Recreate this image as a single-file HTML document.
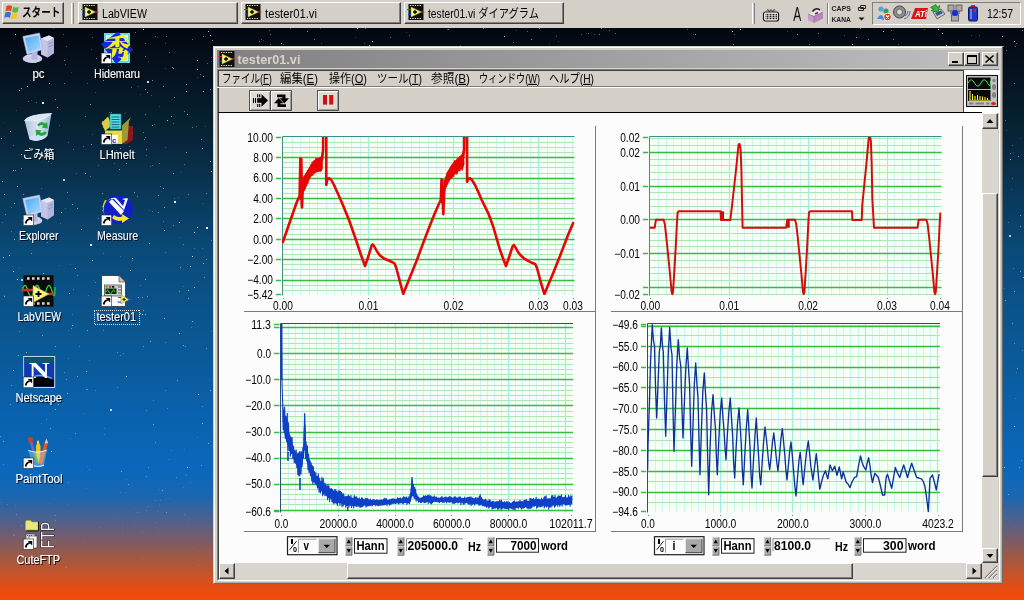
<!DOCTYPE html>
<html lang="ja"><head><meta charset="utf-8"><title>tester01.vi</title>
<style>
*{margin:0;padding:0;box-sizing:border-box}
html,body{width:1024px;height:600px;overflow:hidden}
body{position:relative;font-family:"Liberation Sans","Noto Sans CJK JP",sans-serif;font-size:12px;color:#000;
background:linear-gradient(to bottom,#02060c 0px,#030810 28px,#051422 80px,#06202f 120px,#08283f 150px,#093a5c 200px,#0a4a78 250px,#0a5288 300px,#0a5a9a 360px,#0a62ae 420px,#0a68bc 472px,#1c66b0 497px,#4a6290 518px,#7a5c68 540px,#a8583e 561px,#d8501c 582px,#f04a0c 595px,#f44a08 600px)}
.abs{position:absolute}
svg{position:absolute;left:0;top:0;overflow:visible;opacity:0.999}
svg text{font-family:"Liberation Sans","Noto Sans CJK JP",sans-serif}
#taskbar{position:absolute;left:0;top:0;width:1024px;height:28px;background:#d4d0c8}
.btn{position:absolute;background:#d4d0c8;border:1px solid;border-color:#fff #404040 #404040 #fff;box-shadow:inset -1px -1px 0 #808080,inset 1px 1px 0 #d4d0c8}
.sunk{position:absolute;border:1px solid;border-color:#808080 #fff #fff #808080}
#win{position:absolute;left:213px;top:46px;width:790px;height:538px;background:#d4d0c8;border:1px solid;border-color:#d4d0c8 #6a6a6a #6a6a6a #d4d0c8;box-shadow:inset 1px 1px 0 #fff,inset -1px -1px 0 #b4b0a8}
#title{position:absolute;left:217px;top:50px;width:782px;height:18px;background:linear-gradient(to right,#808080,#c0c0c0)}
#content{position:absolute;left:218px;top:112px;width:764px;height:451px;background:#fcfcfc;border-left:1px solid #404040;border-top:1px solid #000}
.lbl{position:absolute;color:#fff;font-size:12px;white-space:nowrap;text-shadow:1px 1px 1px #000}
</style></head><body>
<svg width="1024" height="600" viewBox="0 0 1024 600"><rect x="92" y="260" width="1" height="1" fill="#fff" opacity="0.60"/><rect x="147" y="92" width="1" height="1" fill="#fff" opacity="0.48"/><rect x="185" y="346" width="1" height="1" fill="#fff" opacity="0.37"/><rect x="64" y="60" width="1" height="1" fill="#fff" opacity="0.42"/><rect x="120" y="256" width="1" height="1" fill="#fff" opacity="0.21"/><rect x="23" y="280" width="1" height="1" fill="#fff" opacity="0.20"/><rect x="154" y="124" width="1" height="1" fill="#fff" opacity="0.24"/><rect x="269" y="30" width="1" height="1" fill="#fff" opacity="0.30"/><rect x="55" y="520" width="1" height="1" fill="#fff" opacity="0.25"/><rect x="68" y="142" width="1" height="1" fill="#fff" opacity="0.29"/><rect x="53" y="28" width="1" height="1" fill="#fff" opacity="0.19"/><rect x="372" y="41" width="1" height="1" fill="#fff" opacity="0.80"/><rect x="152" y="165" width="1" height="1" fill="#fff" opacity="0.30"/><rect x="125" y="492" width="1" height="1" fill="#fff" opacity="0.17"/><rect x="87" y="83" width="1" height="1" fill="#fff" opacity="0.26"/><rect x="23" y="548" width="1" height="1" fill="#fff" opacity="0.06"/><rect x="27" y="316" width="1" height="1" fill="#fff" opacity="0.83"/><rect x="171" y="450" width="1" height="1" fill="#fff" opacity="0.22"/><rect x="1008" y="494" width="1" height="1" fill="#fff" opacity="0.40"/><rect x="364" y="43" width="1" height="1" fill="#fff" opacity="0.26"/><rect x="201" y="139" width="1" height="1" fill="#fff" opacity="0.51"/><rect x="86" y="389" width="1" height="1" fill="#fff" opacity="0.45"/><rect x="174" y="97" width="1" height="1" fill="#fff" opacity="0.51"/><rect x="14" y="559" width="1" height="1" fill="#fff" opacity="0.08"/><rect x="134" y="525" width="1" height="1" fill="#fff" opacity="0.09"/><rect x="19" y="268" width="1" height="1" fill="#fff" opacity="0.15"/><rect x="140" y="94" width="1" height="1" fill="#fff" opacity="0.18"/><rect x="146" y="510" width="1" height="1" fill="#fff" opacity="0.19"/><rect x="19" y="331" width="1" height="1" fill="#fff" opacity="0.28"/><rect x="65" y="566" width="2" height="2" fill="#fff" opacity="0.11"/><rect x="132" y="258" width="1" height="1" fill="#fff" opacity="0.88"/><rect x="58" y="404" width="1" height="1" fill="#fff" opacity="0.53"/><rect x="112" y="116" width="1" height="1" fill="#fff" opacity="0.23"/><rect x="355" y="37" width="1" height="1" fill="#fff" opacity="0.16"/><rect x="194" y="287" width="1" height="1" fill="#fff" opacity="0.59"/><rect x="55" y="99" width="1" height="1" fill="#fff" opacity="0.45"/><rect x="86" y="488" width="1" height="1" fill="#fff" opacity="0.13"/><rect x="365" y="28" width="1" height="1" fill="#fff" opacity="0.34"/><rect x="516" y="30" width="1" height="1" fill="#fff" opacity="0.19"/><rect x="23" y="194" width="1" height="1" fill="#fff" opacity="0.38"/><rect x="153" y="424" width="1" height="1" fill="#fff" opacity="0.47"/><rect x="142" y="314" width="1" height="1" fill="#fff" opacity="0.87"/><rect x="31" y="100" width="1" height="1" fill="#fff" opacity="0.19"/><rect x="3" y="464" width="1" height="1" fill="#fff" opacity="0.25"/><rect x="76" y="173" width="1" height="1" fill="#fff" opacity="0.23"/><rect x="150" y="166" width="1" height="1" fill="#fff" opacity="0.27"/><rect x="581" y="34" width="1" height="1" fill="#fff" opacity="0.26"/><rect x="17" y="279" width="1" height="1" fill="#fff" opacity="0.94"/><rect x="145" y="314" width="1" height="1" fill="#fff" opacity="0.48"/><rect x="25" y="29" width="1" height="1" fill="#fff" opacity="0.33"/><rect x="860" y="28" width="1" height="1" fill="#fff" opacity="0.49"/><rect x="122" y="534" width="1" height="1" fill="#fff" opacity="0.12"/><rect x="1022" y="350" width="1" height="1" fill="#fff" opacity="0.26"/><rect x="49" y="83" width="1" height="1" fill="#fff" opacity="0.66"/><rect x="194" y="232" width="1" height="1" fill="#fff" opacity="0.90"/><rect x="50" y="428" width="1" height="1" fill="#fff" opacity="0.38"/><rect x="171" y="116" width="1" height="1" fill="#fff" opacity="0.51"/><rect x="197" y="77" width="1" height="1" fill="#fff" opacity="0.19"/><rect x="63" y="179" width="2" height="2" fill="#fff" opacity="0.74"/><rect x="893" y="39" width="1" height="1" fill="#fff" opacity="0.43"/><rect x="601" y="28" width="1" height="1" fill="#fff" opacity="0.52"/><rect x="111" y="112" width="1" height="1" fill="#fff" opacity="0.42"/><rect x="72" y="314" width="1" height="1" fill="#fff" opacity="0.24"/><rect x="615" y="33" width="1" height="1" fill="#fff" opacity="0.33"/><rect x="314" y="39" width="1" height="1" fill="#fff" opacity="0.42"/><rect x="149" y="243" width="1" height="1" fill="#fff" opacity="0.54"/><rect x="145" y="56" width="1" height="1" fill="#fff" opacity="0.31"/><rect x="189" y="539" width="1" height="1" fill="#fff" opacity="0.06"/><rect x="2" y="181" width="1" height="1" fill="#fff" opacity="0.53"/><rect x="50" y="286" width="1" height="1" fill="#fff" opacity="0.52"/><rect x="197" y="227" width="1" height="1" fill="#fff" opacity="0.56"/><rect x="35" y="62" width="1" height="1" fill="#fff" opacity="0.65"/><rect x="3" y="441" width="1" height="1" fill="#fff" opacity="0.45"/><rect x="24" y="155" width="1" height="1" fill="#fff" opacity="0.53"/><rect x="187" y="467" width="1" height="1" fill="#fff" opacity="0.57"/><rect x="66" y="46" width="1" height="1" fill="#fff" opacity="0.28"/><rect x="1003" y="511" width="1" height="1" fill="#fff" opacity="0.06"/><rect x="98" y="300" width="1" height="1" fill="#fff" opacity="0.24"/><rect x="157" y="511" width="1" height="1" fill="#fff" opacity="0.11"/><rect x="1014" y="83" width="1" height="1" fill="#fff" opacity="0.48"/><rect x="41" y="188" width="1" height="1" fill="#fff" opacity="0.23"/><rect x="144" y="139" width="1" height="1" fill="#fff" opacity="0.39"/><rect x="11" y="207" width="1" height="1" fill="#fff" opacity="0.22"/><rect x="64" y="83" width="1" height="1" fill="#fff" opacity="0.37"/><rect x="167" y="408" width="1" height="1" fill="#fff" opacity="0.27"/><rect x="1020" y="226" width="1" height="1" fill="#fff" opacity="0.44"/><rect x="208" y="31" width="1" height="1" fill="#fff" opacity="0.72"/><rect x="166" y="36" width="1" height="1" fill="#fff" opacity="0.41"/><rect x="129" y="543" width="1" height="1" fill="#fff" opacity="0.03"/><rect x="126" y="163" width="1" height="1" fill="#fff" opacity="0.51"/><rect x="42" y="335" width="1" height="1" fill="#fff" opacity="0.49"/><rect x="120" y="355" width="1" height="1" fill="#fff" opacity="0.27"/><rect x="23" y="366" width="1" height="1" fill="#fff" opacity="0.46"/><rect x="183" y="286" width="1" height="1" fill="#fff" opacity="0.20"/><rect x="198" y="565" width="1" height="1" fill="#fff" opacity="0.14"/><rect x="169" y="459" width="1" height="1" fill="#fff" opacity="0.21"/><rect x="37" y="127" width="1" height="1" fill="#fff" opacity="0.52"/><rect x="1016" y="372" width="1" height="1" fill="#fff" opacity="0.26"/><rect x="1014" y="343" width="1" height="1" fill="#fff" opacity="0.33"/><rect x="320" y="28" width="1" height="1" fill="#fff" opacity="0.21"/><rect x="135" y="152" width="1" height="1" fill="#fff" opacity="0.16"/><rect x="2" y="222" width="1" height="1" fill="#fff" opacity="0.29"/><rect x="152" y="80" width="1" height="1" fill="#fff" opacity="0.50"/><rect x="270" y="34" width="1" height="1" fill="#fff" opacity="0.37"/><rect x="797" y="34" width="1" height="1" fill="#fff" opacity="0.53"/><rect x="145" y="137" width="1" height="1" fill="#fff" opacity="0.35"/><rect x="178" y="197" width="1" height="1" fill="#fff" opacity="0.17"/><rect x="732" y="31" width="1" height="1" fill="#fff" opacity="0.85"/><rect x="107" y="155" width="1" height="1" fill="#fff" opacity="0.28"/><rect x="15" y="170" width="1" height="1" fill="#fff" opacity="0.45"/><rect x="27" y="86" width="1" height="1" fill="#fff" opacity="0.69"/><rect x="145" y="43" width="1" height="1" fill="#fff" opacity="0.43"/><rect x="210" y="89" width="1" height="1" fill="#fff" opacity="0.49"/><rect x="21" y="168" width="1" height="1" fill="#fff" opacity="0.44"/><rect x="31" y="253" width="1" height="1" fill="#fff" opacity="0.46"/><rect x="1" y="138" width="1" height="1" fill="#fff" opacity="0.54"/><rect x="4" y="296" width="1" height="1" fill="#fff" opacity="0.47"/><rect x="188" y="298" width="1" height="1" fill="#fff" opacity="0.48"/><rect x="211" y="171" width="1" height="1" fill="#fff" opacity="0.75"/><rect x="159" y="489" width="1" height="1" fill="#fff" opacity="0.11"/><rect x="159" y="163" width="1" height="1" fill="#fff" opacity="0.36"/><rect x="164" y="207" width="1" height="1" fill="#fff" opacity="0.54"/><rect x="211" y="240" width="1" height="1" fill="#fff" opacity="0.31"/><rect x="1008" y="222" width="1" height="1" fill="#fff" opacity="0.26"/><rect x="409" y="35" width="1" height="1" fill="#fff" opacity="0.32"/><rect x="128" y="484" width="1" height="1" fill="#fff" opacity="0.36"/><rect x="15" y="34" width="1" height="1" fill="#fff" opacity="0.81"/><rect x="146" y="155" width="1" height="1" fill="#fff" opacity="0.29"/><rect x="156" y="522" width="1" height="1" fill="#fff" opacity="0.14"/><rect x="202" y="406" width="1" height="1" fill="#fff" opacity="0.33"/><rect x="142" y="297" width="1" height="1" fill="#fff" opacity="0.34"/><rect x="147" y="296" width="1" height="1" fill="#fff" opacity="0.37"/><rect x="883" y="31" width="1" height="1" fill="#fff" opacity="0.74"/><rect x="77" y="376" width="1" height="1" fill="#fff" opacity="0.39"/><rect x="41" y="423" width="1" height="1" fill="#fff" opacity="0.17"/><rect x="307" y="31" width="1" height="1" fill="#fff" opacity="0.52"/><rect x="103" y="127" width="1" height="1" fill="#fff" opacity="0.46"/><rect x="121" y="471" width="1" height="1" fill="#fff" opacity="0.46"/><rect x="14" y="239" width="1" height="1" fill="#fff" opacity="0.53"/><rect x="1004" y="288" width="1" height="1" fill="#fff" opacity="0.19"/><rect x="155" y="36" width="1" height="1" fill="#fff" opacity="0.42"/><rect x="51" y="451" width="1" height="1" fill="#fff" opacity="0.65"/><rect x="86" y="371" width="1" height="1" fill="#fff" opacity="0.52"/><rect x="734" y="34" width="1" height="1" fill="#fff" opacity="0.41"/><rect x="169" y="498" width="1" height="1" fill="#fff" opacity="0.13"/><rect x="290" y="28" width="1" height="1" fill="#fff" opacity="0.32"/><rect x="87" y="330" width="1" height="1" fill="#fff" opacity="0.45"/><rect x="89" y="469" width="1" height="1" fill="#fff" opacity="0.25"/><rect x="196" y="126" width="1" height="1" fill="#fff" opacity="0.30"/><rect x="45" y="573" width="1" height="1" fill="#fff" opacity="0.06"/><rect x="531" y="39" width="1" height="1" fill="#fff" opacity="0.55"/><rect x="205" y="126" width="1" height="1" fill="#fff" opacity="0.17"/><rect x="163" y="556" width="1" height="1" fill="#fff" opacity="0.02"/><rect x="57" y="107" width="1" height="1" fill="#fff" opacity="0.53"/><rect x="107" y="205" width="1" height="1" fill="#fff" opacity="0.20"/><rect x="693" y="34" width="1" height="1" fill="#fff" opacity="0.23"/><rect x="146" y="149" width="1" height="1" fill="#fff" opacity="0.44"/><rect x="206" y="227" width="2" height="2" fill="#fff" opacity="1.00"/><rect x="1002" y="36" width="1" height="1" fill="#fff" opacity="0.69"/><rect x="143" y="29" width="1" height="1" fill="#fff" opacity="0.76"/><rect x="190" y="266" width="1" height="1" fill="#fff" opacity="0.64"/><rect x="184" y="449" width="1" height="1" fill="#fff" opacity="0.14"/><rect x="89" y="360" width="1" height="1" fill="#fff" opacity="0.23"/><rect x="207" y="63" width="1" height="1" fill="#fff" opacity="0.31"/><rect x="504" y="36" width="1" height="1" fill="#fff" opacity="0.74"/><rect x="190" y="482" width="1" height="1" fill="#fff" opacity="0.16"/><rect x="609" y="30" width="1" height="1" fill="#fff" opacity="0.33"/><rect x="186" y="84" width="1" height="1" fill="#fff" opacity="0.48"/><rect x="30" y="80" width="1" height="1" fill="#fff" opacity="0.23"/><rect x="18" y="355" width="1" height="1" fill="#fff" opacity="0.43"/><rect x="105" y="503" width="1" height="1" fill="#fff" opacity="0.08"/><rect x="150" y="341" width="1" height="1" fill="#fff" opacity="0.48"/><rect x="1004" y="467" width="1" height="1" fill="#fff" opacity="0.58"/><rect x="54" y="311" width="1" height="1" fill="#fff" opacity="0.65"/><rect x="70" y="264" width="1" height="1" fill="#fff" opacity="0.16"/><rect x="142" y="558" width="1" height="1" fill="#fff" opacity="0.12"/><rect x="123" y="353" width="1" height="1" fill="#fff" opacity="0.26"/><rect x="151" y="95" width="1" height="1" fill="#fff" opacity="0.27"/><rect x="599" y="34" width="1" height="1" fill="#fff" opacity="0.49"/><rect x="1011" y="189" width="1" height="1" fill="#fff" opacity="0.21"/><rect x="68" y="504" width="1" height="1" fill="#fff" opacity="0.12"/><rect x="111" y="151" width="1" height="1" fill="#fff" opacity="0.85"/><rect x="158" y="212" width="1" height="1" fill="#fff" opacity="0.42"/><rect x="891" y="30" width="1" height="1" fill="#fff" opacity="0.38"/><rect x="188" y="194" width="1" height="1" fill="#fff" opacity="0.38"/><rect x="10" y="53" width="1" height="1" fill="#fff" opacity="0.35"/><rect x="101" y="232" width="1" height="1" fill="#fff" opacity="0.37"/><rect x="1020" y="215" width="1" height="1" fill="#fff" opacity="0.48"/><rect x="174" y="201" width="2" height="2" fill="#fff" opacity="0.95"/><rect x="160" y="186" width="1" height="1" fill="#fff" opacity="0.35"/><rect x="192" y="127" width="1" height="1" fill="#fff" opacity="0.39"/><rect x="4" y="194" width="1" height="1" fill="#fff" opacity="0.78"/><rect x="124" y="113" width="1" height="1" fill="#fff" opacity="0.19"/><rect x="102" y="121" width="1" height="1" fill="#fff" opacity="0.48"/><rect x="63" y="34" width="1" height="1" fill="#fff" opacity="0.28"/><rect x="173" y="173" width="1" height="1" fill="#fff" opacity="0.51"/><rect x="55" y="515" width="1" height="1" fill="#fff" opacity="0.23"/><rect x="45" y="537" width="1" height="1" fill="#fff" opacity="0.08"/><rect x="126" y="479" width="1" height="1" fill="#fff" opacity="0.13"/><rect x="130" y="270" width="1" height="1" fill="#fff" opacity="0.87"/><rect x="163" y="221" width="1" height="1" fill="#fff" opacity="0.30"/><rect x="67" y="198" width="1" height="1" fill="#fff" opacity="0.20"/><rect x="283" y="44" width="1" height="1" fill="#fff" opacity="0.42"/><rect x="186" y="91" width="1" height="1" fill="#fff" opacity="0.84"/><rect x="40" y="116" width="1" height="1" fill="#fff" opacity="0.27"/><rect x="183" y="487" width="1" height="1" fill="#fff" opacity="0.13"/><rect x="357" y="28" width="1" height="1" fill="#fff" opacity="0.86"/><rect x="48" y="161" width="1" height="1" fill="#fff" opacity="0.47"/><rect x="55" y="409" width="1" height="1" fill="#fff" opacity="0.52"/><rect x="60" y="223" width="1" height="1" fill="#fff" opacity="0.23"/><rect x="211" y="61" width="1" height="1" fill="#fff" opacity="0.23"/><rect x="115" y="205" width="1" height="1" fill="#fff" opacity="0.30"/><rect x="172" y="67" width="1" height="1" fill="#fff" opacity="0.55"/><rect x="28" y="451" width="1" height="1" fill="#fff" opacity="0.17"/><rect x="161" y="191" width="1" height="1" fill="#fff" opacity="0.18"/><rect x="91" y="49" width="1" height="1" fill="#fff" opacity="0.23"/><rect x="740" y="29" width="1" height="1" fill="#fff" opacity="0.89"/><rect x="200" y="74" width="1" height="1" fill="#fff" opacity="0.33"/><rect x="28" y="131" width="1" height="1" fill="#fff" opacity="0.33"/><rect x="87" y="389" width="1" height="1" fill="#fff" opacity="0.32"/><rect x="184" y="514" width="1" height="1" fill="#fff" opacity="0.16"/><rect x="115" y="308" width="1" height="1" fill="#fff" opacity="0.31"/><rect x="75" y="268" width="1" height="1" fill="#fff" opacity="0.77"/><rect x="117" y="569" width="1" height="1" fill="#fff" opacity="0.07"/><rect x="115" y="534" width="1" height="1" fill="#fff" opacity="0.04"/><rect x="21" y="88" width="1" height="1" fill="#fff" opacity="0.62"/><rect x="147" y="506" width="1" height="1" fill="#fff" opacity="0.18"/><rect x="971" y="35" width="1" height="1" fill="#fff" opacity="0.21"/><rect x="186" y="475" width="1" height="1" fill="#fff" opacity="0.21"/><rect x="162" y="490" width="1" height="1" fill="#fff" opacity="0.40"/><rect x="77" y="208" width="1" height="1" fill="#fff" opacity="0.51"/><rect x="173" y="225" width="1" height="1" fill="#fff" opacity="0.38"/><rect x="21" y="279" width="2" height="2" fill="#fff" opacity="0.71"/><rect x="1015" y="46" width="1" height="1" fill="#fff" opacity="0.46"/><rect x="61" y="212" width="1" height="1" fill="#fff" opacity="0.55"/><rect x="7" y="504" width="1" height="1" fill="#fff" opacity="0.15"/><rect x="67" y="192" width="1" height="1" fill="#fff" opacity="0.44"/><rect x="183" y="345" width="1" height="1" fill="#fff" opacity="0.46"/><rect x="69" y="293" width="1" height="1" fill="#fff" opacity="0.66"/><rect x="263" y="40" width="1" height="1" fill="#fff" opacity="0.26"/><rect x="192" y="321" width="1" height="1" fill="#fff" opacity="0.52"/><rect x="13" y="534" width="2" height="2" fill="#fff" opacity="0.13"/><rect x="159" y="106" width="1" height="1" fill="#fff" opacity="0.19"/><rect x="135" y="32" width="1" height="1" fill="#fff" opacity="0.41"/><rect x="1013" y="152" width="1" height="1" fill="#fff" opacity="0.19"/><rect x="28" y="101" width="1" height="1" fill="#fff" opacity="0.35"/><rect x="152" y="125" width="1" height="1" fill="#fff" opacity="0.52"/><rect x="165" y="43" width="1" height="1" fill="#fff" opacity="0.25"/><rect x="1005" y="300" width="1" height="1" fill="#fff" opacity="0.47"/><rect x="208" y="443" width="1" height="1" fill="#fff" opacity="0.46"/><rect x="160" y="500" width="1" height="1" fill="#fff" opacity="0.19"/><rect x="186" y="500" width="1" height="1" fill="#fff" opacity="0.07"/><rect x="1003" y="46" width="1" height="1" fill="#fff" opacity="0.47"/><rect x="115" y="221" width="1" height="1" fill="#fff" opacity="0.52"/><rect x="181" y="172" width="1" height="1" fill="#fff" opacity="0.17"/><rect x="10" y="404" width="1" height="1" fill="#fff" opacity="0.37"/><rect x="1022" y="30" width="1" height="1" fill="#fff" opacity="0.52"/><rect x="203" y="91" width="1" height="1" fill="#fff" opacity="0.86"/><rect x="0" y="436" width="1" height="1" fill="#fff" opacity="0.34"/><rect x="1018" y="156" width="1" height="1" fill="#fff" opacity="0.45"/><rect x="145" y="535" width="1" height="1" fill="#fff" opacity="0.06"/><rect x="176" y="477" width="1" height="1" fill="#fff" opacity="0.28"/><rect x="44" y="236" width="1" height="1" fill="#fff" opacity="0.88"/><rect x="125" y="112" width="1" height="1" fill="#fff" opacity="0.19"/><rect x="90" y="244" width="2" height="2" fill="#fff" opacity="0.91"/><rect x="153" y="400" width="1" height="1" fill="#fff" opacity="0.25"/><rect x="390" y="37" width="1" height="1" fill="#fff" opacity="0.38"/><rect x="59" y="125" width="1" height="1" fill="#fff" opacity="0.26"/><rect x="206" y="259" width="1" height="1" fill="#fff" opacity="0.40"/><rect x="26" y="352" width="1" height="1" fill="#fff" opacity="0.49"/><rect x="41" y="399" width="1" height="1" fill="#fff" opacity="0.46"/><rect x="120" y="148" width="1" height="1" fill="#fff" opacity="0.48"/><rect x="104" y="76" width="1" height="1" fill="#fff" opacity="0.38"/><rect x="56" y="400" width="1" height="1" fill="#fff" opacity="0.17"/><rect x="149" y="210" width="1" height="1" fill="#fff" opacity="0.15"/><rect x="1012" y="178" width="1" height="1" fill="#fff" opacity="0.28"/><rect x="53" y="321" width="1" height="1" fill="#fff" opacity="0.35"/><rect x="52" y="199" width="1" height="1" fill="#fff" opacity="0.31"/><rect x="59" y="265" width="1" height="1" fill="#fff" opacity="0.17"/><rect x="103" y="80" width="1" height="1" fill="#fff" opacity="0.53"/><rect x="95" y="282" width="1" height="1" fill="#fff" opacity="0.32"/><rect x="90" y="104" width="1" height="1" fill="#fff" opacity="0.51"/><rect x="946" y="45" width="1" height="1" fill="#fff" opacity="0.54"/><rect x="167" y="120" width="1" height="1" fill="#fff" opacity="0.68"/><rect x="120" y="283" width="1" height="1" fill="#fff" opacity="0.36"/><rect x="202" y="248" width="1" height="1" fill="#fff" opacity="0.20"/><rect x="15" y="543" width="1" height="1" fill="#fff" opacity="0.06"/><rect x="270" y="44" width="1" height="1" fill="#fff" opacity="0.36"/><rect x="1006" y="50" width="1" height="1" fill="#fff" opacity="0.43"/><rect x="942" y="33" width="1" height="1" fill="#fff" opacity="0.71"/><rect x="202" y="148" width="1" height="1" fill="#fff" opacity="0.54"/><rect x="1021" y="460" width="1" height="1" fill="#fff" opacity="0.33"/><rect x="166" y="556" width="1" height="1" fill="#fff" opacity="0.03"/><rect x="4" y="295" width="1" height="1" fill="#fff" opacity="0.19"/><rect x="90" y="176" width="1" height="1" fill="#fff" opacity="0.33"/><rect x="539" y="28" width="1" height="1" fill="#fff" opacity="0.53"/><rect x="103" y="330" width="1" height="1" fill="#fff" opacity="0.30"/><rect x="35" y="205" width="1" height="1" fill="#fff" opacity="0.53"/><rect x="47" y="242" width="1" height="1" fill="#fff" opacity="0.41"/><rect x="165" y="342" width="1" height="1" fill="#fff" opacity="0.29"/><rect x="143" y="310" width="1" height="1" fill="#fff" opacity="0.45"/><rect x="174" y="198" width="1" height="1" fill="#fff" opacity="0.27"/><rect x="202" y="203" width="1" height="1" fill="#fff" opacity="0.19"/><rect x="155" y="442" width="1" height="1" fill="#fff" opacity="0.35"/><rect x="71" y="328" width="1" height="1" fill="#fff" opacity="0.32"/><rect x="68" y="358" width="1" height="1" fill="#fff" opacity="0.24"/><rect x="549" y="44" width="1" height="1" fill="#fff" opacity="0.16"/><rect x="64" y="372" width="1" height="1" fill="#fff" opacity="0.31"/><rect x="1019" y="467" width="1" height="1" fill="#fff" opacity="0.36"/><rect x="73" y="289" width="1" height="1" fill="#fff" opacity="0.33"/><rect x="194" y="248" width="1" height="1" fill="#fff" opacity="0.23"/><rect x="210" y="35" width="1" height="1" fill="#fff" opacity="0.84"/><rect x="179" y="222" width="1" height="1" fill="#fff" opacity="0.87"/><rect x="109" y="112" width="1" height="1" fill="#fff" opacity="0.34"/><rect x="1014" y="526" width="1" height="1" fill="#fff" opacity="0.11"/><rect x="131" y="87" width="1" height="1" fill="#fff" opacity="0.35"/><rect x="21" y="525" width="1" height="1" fill="#fff" opacity="0.23"/><rect x="13" y="145" width="1" height="1" fill="#fff" opacity="0.30"/><rect x="9" y="482" width="1" height="1" fill="#fff" opacity="0.09"/><rect x="72" y="204" width="1" height="1" fill="#fff" opacity="0.50"/><rect x="210" y="161" width="1" height="1" fill="#fff" opacity="0.70"/><rect x="204" y="277" width="1" height="1" fill="#fff" opacity="0.40"/><rect x="145" y="525" width="1" height="1" fill="#fff" opacity="0.06"/><rect x="1010" y="153" width="1" height="1" fill="#fff" opacity="0.47"/><rect x="96" y="561" width="1" height="1" fill="#fff" opacity="0.03"/><rect x="157" y="37" width="1" height="1" fill="#fff" opacity="0.19"/><rect x="938" y="29" width="1" height="1" fill="#fff" opacity="0.77"/><rect x="406" y="32" width="1" height="1" fill="#fff" opacity="0.16"/><rect x="787" y="31" width="1" height="1" fill="#fff" opacity="0.20"/><rect x="733" y="44" width="1" height="1" fill="#fff" opacity="0.49"/><rect x="184" y="543" width="1" height="1" fill="#fff" opacity="0.04"/><rect x="21" y="154" width="1" height="1" fill="#fff" opacity="0.92"/><rect x="164" y="318" width="1" height="1" fill="#fff" opacity="0.53"/><rect x="91" y="144" width="1" height="1" fill="#fff" opacity="0.51"/><rect x="13" y="170" width="1" height="1" fill="#fff" opacity="0.55"/><rect x="180" y="267" width="1" height="1" fill="#fff" opacity="0.43"/><rect x="65" y="64" width="1" height="1" fill="#fff" opacity="0.29"/><rect x="145" y="89" width="1" height="1" fill="#fff" opacity="0.54"/><rect x="102" y="193" width="1" height="1" fill="#fff" opacity="0.43"/><rect x="852" y="44" width="1" height="1" fill="#fff" opacity="0.64"/><rect x="10" y="131" width="1" height="1" fill="#fff" opacity="0.61"/><rect x="147" y="81" width="2" height="2" fill="#fff" opacity="0.81"/><rect x="114" y="163" width="1" height="1" fill="#fff" opacity="0.26"/><rect x="51" y="391" width="1" height="1" fill="#fff" opacity="0.16"/><rect x="95" y="92" width="1" height="1" fill="#fff" opacity="0.22"/><rect x="121" y="65" width="1" height="1" fill="#fff" opacity="0.34"/><rect x="73" y="149" width="1" height="1" fill="#fff" opacity="0.38"/><rect x="85" y="173" width="1" height="1" fill="#fff" opacity="0.73"/><rect x="210" y="390" width="1" height="1" fill="#fff" opacity="0.54"/><rect x="11" y="385" width="1" height="1" fill="#fff" opacity="0.34"/><rect x="148" y="467" width="1" height="1" fill="#fff" opacity="0.33"/><rect x="186" y="152" width="1" height="1" fill="#fff" opacity="0.51"/><rect x="83" y="146" width="1" height="1" fill="#fff" opacity="0.33"/><rect x="143" y="132" width="1" height="1" fill="#fff" opacity="0.38"/><rect x="695" y="34" width="1" height="1" fill="#fff" opacity="0.64"/><rect x="1023" y="277" width="1" height="1" fill="#fff" opacity="0.53"/><rect x="23" y="232" width="1" height="1" fill="#fff" opacity="0.48"/><rect x="140" y="313" width="1" height="1" fill="#fff" opacity="0.57"/><rect x="17" y="186" width="1" height="1" fill="#fff" opacity="0.54"/><rect x="197" y="69" width="1" height="1" fill="#fff" opacity="0.78"/><rect x="75" y="433" width="1" height="1" fill="#fff" opacity="0.38"/><rect x="818" y="33" width="1" height="1" fill="#fff" opacity="0.42"/><rect x="184" y="552" width="1" height="1" fill="#fff" opacity="0.05"/><rect x="130" y="149" width="1" height="1" fill="#fff" opacity="0.26"/><rect x="36" y="102" width="1" height="1" fill="#fff" opacity="0.32"/><rect x="79" y="346" width="1" height="1" fill="#fff" opacity="0.29"/><rect x="179" y="291" width="1" height="1" fill="#fff" opacity="0.42"/><rect x="164" y="230" width="1" height="1" fill="#fff" opacity="0.86"/><rect x="203" y="36" width="1" height="1" fill="#fff" opacity="0.44"/><rect x="4" y="122" width="1" height="1" fill="#fff" opacity="0.15"/><rect x="19" y="90" width="1" height="1" fill="#fff" opacity="0.94"/><rect x="152" y="211" width="1" height="1" fill="#fff" opacity="0.28"/><rect x="85" y="116" width="1" height="1" fill="#fff" opacity="0.40"/><rect x="192" y="536" width="1" height="1" fill="#fff" opacity="0.04"/><rect x="95" y="390" width="1" height="1" fill="#fff" opacity="0.23"/><rect x="122" y="305" width="1" height="1" fill="#fff" opacity="0.44"/><rect x="108" y="66" width="1" height="1" fill="#fff" opacity="0.34"/><rect x="107" y="277" width="1" height="1" fill="#fff" opacity="0.26"/><rect x="38" y="564" width="1" height="1" fill="#fff" opacity="0.05"/><rect x="70" y="438" width="1" height="1" fill="#fff" opacity="0.16"/><rect x="138" y="86" width="1" height="1" fill="#fff" opacity="0.22"/><rect x="173" y="123" width="1" height="1" fill="#fff" opacity="0.32"/><rect x="119" y="169" width="1" height="1" fill="#fff" opacity="0.51"/><rect x="132" y="133" width="1" height="1" fill="#fff" opacity="0.59"/><rect x="192" y="256" width="1" height="1" fill="#fff" opacity="0.90"/><rect x="588" y="33" width="1" height="1" fill="#fff" opacity="0.39"/><rect x="112" y="152" width="1" height="1" fill="#fff" opacity="0.71"/><rect x="1014" y="426" width="1" height="1" fill="#fff" opacity="0.62"/><rect x="49" y="503" width="1" height="1" fill="#fff" opacity="0.11"/><rect x="102" y="206" width="1" height="1" fill="#fff" opacity="0.47"/><rect x="94" y="314" width="1" height="1" fill="#fff" opacity="0.29"/><rect x="206" y="193" width="1" height="1" fill="#fff" opacity="0.44"/><rect x="191" y="327" width="1" height="1" fill="#fff" opacity="0.21"/><rect x="187" y="525" width="1" height="1" fill="#fff" opacity="0.12"/><rect x="212" y="40" width="1" height="1" fill="#fff" opacity="0.51"/><rect x="5" y="214" width="1" height="1" fill="#fff" opacity="0.45"/><rect x="206" y="348" width="1" height="1" fill="#fff" opacity="0.43"/><rect x="53" y="544" width="1" height="1" fill="#fff" opacity="0.03"/><rect x="145" y="279" width="1" height="1" fill="#fff" opacity="0.55"/><rect x="165" y="252" width="1" height="1" fill="#fff" opacity="0.27"/><rect x="165" y="147" width="1" height="1" fill="#fff" opacity="0.23"/><rect x="188" y="290" width="1" height="1" fill="#fff" opacity="0.54"/><rect x="173" y="68" width="1" height="1" fill="#fff" opacity="0.54"/><rect x="155" y="500" width="1" height="1" fill="#fff" opacity="0.21"/><rect x="118" y="518" width="1" height="1" fill="#fff" opacity="0.08"/><rect x="197" y="60" width="1" height="1" fill="#fff" opacity="0.61"/><rect x="197" y="437" width="1" height="1" fill="#fff" opacity="0.16"/><rect x="39" y="58" width="1" height="1" fill="#fff" opacity="0.16"/><rect x="115" y="116" width="1" height="1" fill="#fff" opacity="0.39"/><rect x="184" y="111" width="1" height="1" fill="#fff" opacity="0.44"/><rect x="60" y="318" width="1" height="1" fill="#fff" opacity="0.33"/><rect x="179" y="237" width="1" height="1" fill="#fff" opacity="0.15"/><rect x="527" y="31" width="1" height="1" fill="#fff" opacity="0.32"/><rect x="84" y="536" width="1" height="1" fill="#fff" opacity="0.08"/><rect x="99" y="298" width="1" height="1" fill="#fff" opacity="0.24"/><rect x="1012" y="323" width="1" height="1" fill="#fff" opacity="0.40"/><rect x="35" y="282" width="1" height="1" fill="#fff" opacity="0.44"/><rect x="167" y="536" width="1" height="1" fill="#fff" opacity="0.04"/><rect x="100" y="527" width="1" height="1" fill="#fff" opacity="0.10"/><rect x="140" y="285" width="1" height="1" fill="#fff" opacity="0.26"/><rect x="166" y="512" width="1" height="1" fill="#fff" opacity="0.32"/><rect x="143" y="346" width="1" height="1" fill="#fff" opacity="0.37"/><rect x="321" y="43" width="1" height="1" fill="#fff" opacity="0.20"/><rect x="1015" y="398" width="1" height="1" fill="#fff" opacity="0.17"/><rect x="9" y="255" width="1" height="1" fill="#fff" opacity="0.79"/><rect x="844" y="35" width="1" height="1" fill="#fff" opacity="0.22"/><rect x="68" y="482" width="1" height="1" fill="#fff" opacity="0.25"/><rect x="1017" y="368" width="1" height="1" fill="#fff" opacity="0.44"/><rect x="145" y="114" width="1" height="1" fill="#fff" opacity="0.39"/><rect x="556" y="36" width="1" height="1" fill="#fff" opacity="0.32"/><rect x="71" y="72" width="1" height="1" fill="#fff" opacity="0.19"/><rect x="158" y="195" width="1" height="1" fill="#fff" opacity="0.51"/><rect x="169" y="52" width="1" height="1" fill="#fff" opacity="0.49"/><rect x="104" y="434" width="1" height="1" fill="#fff" opacity="0.20"/><rect x="924" y="29" width="1" height="1" fill="#fff" opacity="0.31"/><rect x="203" y="76" width="1" height="1" fill="#fff" opacity="0.55"/><rect x="72" y="325" width="1" height="1" fill="#fff" opacity="0.59"/><rect x="198" y="394" width="1" height="1" fill="#fff" opacity="0.67"/><rect x="46" y="419" width="1" height="1" fill="#fff" opacity="0.28"/><rect x="55" y="346" width="1" height="1" fill="#fff" opacity="0.43"/><rect x="448" y="29" width="1" height="1" fill="#fff" opacity="0.44"/><rect x="159" y="505" width="1" height="1" fill="#fff" opacity="0.12"/><rect x="687" y="29" width="1" height="1" fill="#fff" opacity="0.29"/><rect x="369" y="45" width="1" height="1" fill="#fff" opacity="0.76"/><rect x="187" y="114" width="1" height="1" fill="#fff" opacity="0.52"/><rect x="122" y="521" width="1" height="1" fill="#fff" opacity="0.11"/><rect x="261" y="39" width="1" height="1" fill="#fff" opacity="0.30"/><rect x="11" y="231" width="1" height="1" fill="#fff" opacity="0.28"/><rect x="192" y="39" width="1" height="1" fill="#fff" opacity="0.39"/><rect x="37" y="205" width="1" height="1" fill="#fff" opacity="0.39"/><rect x="1010" y="159" width="1" height="1" fill="#fff" opacity="0.65"/><rect x="38" y="463" width="1" height="1" fill="#fff" opacity="0.32"/><rect x="55" y="236" width="1" height="1" fill="#fff" opacity="0.40"/><rect x="93" y="280" width="1" height="1" fill="#fff" opacity="0.15"/><rect x="95" y="77" width="1" height="1" fill="#fff" opacity="0.32"/><rect x="1005" y="120" width="1" height="1" fill="#fff" opacity="0.35"/><rect x="117" y="387" width="1" height="1" fill="#fff" opacity="0.28"/><rect x="165" y="390" width="1" height="1" fill="#fff" opacity="0.31"/><rect x="29" y="148" width="1" height="1" fill="#fff" opacity="0.82"/><rect x="177" y="380" width="1" height="1" fill="#fff" opacity="0.41"/><rect x="137" y="196" width="1" height="1" fill="#fff" opacity="0.37"/><rect x="16" y="514" width="1" height="1" fill="#fff" opacity="0.27"/><rect x="26" y="212" width="1" height="1" fill="#fff" opacity="0.18"/><rect x="163" y="188" width="1" height="1" fill="#fff" opacity="0.52"/><rect x="1013" y="268" width="1" height="1" fill="#fff" opacity="0.26"/><rect x="93" y="534" width="1" height="1" fill="#fff" opacity="0.09"/><rect x="146" y="410" width="1" height="1" fill="#fff" opacity="0.33"/><rect x="513" y="42" width="1" height="1" fill="#fff" opacity="0.45"/><rect x="157" y="530" width="1" height="1" fill="#fff" opacity="0.10"/><rect x="202" y="423" width="1" height="1" fill="#fff" opacity="0.57"/><rect x="447" y="29" width="1" height="1" fill="#fff" opacity="0.25"/><rect x="103" y="253" width="1" height="1" fill="#fff" opacity="0.21"/><rect x="856" y="37" width="1" height="1" fill="#fff" opacity="0.63"/><rect x="39" y="447" width="1" height="1" fill="#fff" opacity="0.19"/><rect x="66" y="379" width="1" height="1" fill="#fff" opacity="0.37"/><rect x="51" y="163" width="1" height="1" fill="#fff" opacity="0.25"/><rect x="88" y="295" width="1" height="1" fill="#fff" opacity="0.27"/><rect x="116" y="150" width="1" height="1" fill="#fff" opacity="0.28"/><rect x="110" y="409" width="2" height="2" fill="#fff" opacity="0.76"/><rect x="37" y="442" width="1" height="1" fill="#fff" opacity="0.60"/><rect x="81" y="229" width="1" height="1" fill="#fff" opacity="0.94"/><rect x="13" y="370" width="1" height="1" fill="#fff" opacity="0.74"/><rect x="134" y="192" width="1" height="1" fill="#fff" opacity="0.44"/><rect x="209" y="379" width="1" height="1" fill="#fff" opacity="0.16"/><rect x="958" y="41" width="1" height="1" fill="#fff" opacity="0.30"/><rect x="183" y="244" width="1" height="1" fill="#fff" opacity="0.32"/><rect x="43" y="273" width="1" height="1" fill="#fff" opacity="0.63"/><rect x="19" y="233" width="1" height="1" fill="#fff" opacity="0.34"/><rect x="16" y="110" width="1" height="1" fill="#fff" opacity="0.18"/><rect x="92" y="134" width="1" height="1" fill="#fff" opacity="0.20"/><rect x="102" y="63" width="1" height="1" fill="#fff" opacity="0.39"/><rect x="87" y="466" width="1" height="1" fill="#fff" opacity="0.13"/><rect x="208" y="573" width="1" height="1" fill="#fff" opacity="0.12"/><rect x="198" y="281" width="1" height="1" fill="#fff" opacity="0.19"/><rect x="195" y="553" width="1" height="1" fill="#fff" opacity="0.04"/><rect x="192" y="547" width="1" height="1" fill="#fff" opacity="0.08"/><rect x="12" y="266" width="1" height="1" fill="#fff" opacity="0.16"/><rect x="259" y="41" width="1" height="1" fill="#fff" opacity="0.43"/><rect x="868" y="39" width="1" height="1" fill="#fff" opacity="0.47"/><rect x="138" y="297" width="1" height="1" fill="#fff" opacity="0.53"/><rect x="1020" y="271" width="1" height="1" fill="#fff" opacity="0.40"/><rect x="77" y="275" width="1" height="1" fill="#fff" opacity="0.34"/><rect x="1020" y="138" width="1" height="1" fill="#fff" opacity="0.15"/><rect x="96" y="58" width="1" height="1" fill="#fff" opacity="0.48"/><rect x="594" y="34" width="1" height="1" fill="#fff" opacity="0.25"/><rect x="104" y="428" width="1" height="1" fill="#fff" opacity="0.18"/><rect x="1016" y="43" width="1" height="1" fill="#fff" opacity="0.37"/><rect x="14" y="203" width="1" height="1" fill="#fff" opacity="0.57"/><rect x="809" y="44" width="1" height="1" fill="#fff" opacity="0.47"/><rect x="179" y="333" width="1" height="1" fill="#fff" opacity="0.56"/><rect x="65" y="208" width="1" height="1" fill="#fff" opacity="0.20"/><rect x="146" y="476" width="1" height="1" fill="#fff" opacity="0.31"/><rect x="1" y="502" width="1" height="1" fill="#fff" opacity="0.19"/><rect x="163" y="86" width="1" height="1" fill="#fff" opacity="0.50"/><rect x="165" y="68" width="1" height="1" fill="#fff" opacity="0.19"/><rect x="460" y="45" width="1" height="1" fill="#fff" opacity="0.25"/><rect x="105" y="302" width="1" height="1" fill="#fff" opacity="0.32"/><rect x="1014" y="291" width="1" height="1" fill="#fff" opacity="0.49"/><rect x="126" y="376" width="1" height="1" fill="#fff" opacity="0.81"/><rect x="142" y="531" width="1" height="1" fill="#fff" opacity="0.14"/><rect x="1014" y="41" width="1" height="1" fill="#fff" opacity="0.88"/><rect x="201" y="465" width="1" height="1" fill="#fff" opacity="0.36"/><rect x="110" y="65" width="1" height="1" fill="#fff" opacity="0.38"/><rect x="211" y="57" width="1" height="1" fill="#fff" opacity="0.29"/><rect x="67" y="393" width="1" height="1" fill="#fff" opacity="0.52"/><rect x="68" y="330" width="1" height="1" fill="#fff" opacity="0.17"/><rect x="185" y="474" width="1" height="1" fill="#fff" opacity="0.18"/><rect x="102" y="210" width="1" height="1" fill="#fff" opacity="0.49"/><rect x="13" y="271" width="1" height="1" fill="#fff" opacity="0.86"/><rect x="1009" y="235" width="2" height="2" fill="#fff" opacity="0.70"/><rect x="898" y="44" width="1" height="1" fill="#fff" opacity="0.31"/><rect x="483" y="28" width="1" height="1" fill="#fff" opacity="0.42"/><rect x="98" y="218" width="1" height="1" fill="#fff" opacity="0.38"/><rect x="98" y="165" width="1" height="1" fill="#fff" opacity="0.26"/><rect x="979" y="35" width="1" height="1" fill="#fff" opacity="0.28"/><rect x="203" y="263" width="1" height="1" fill="#fff" opacity="0.56"/><rect x="184" y="164" width="1" height="1" fill="#fff" opacity="0.33"/><rect x="137" y="512" width="1" height="1" fill="#fff" opacity="0.18"/><rect x="1006" y="130" width="1" height="1" fill="#fff" opacity="0.17"/><rect x="129" y="146" width="1" height="1" fill="#fff" opacity="0.34"/><rect x="120" y="492" width="1" height="1" fill="#fff" opacity="0.19"/><rect x="44" y="538" width="1" height="1" fill="#fff" opacity="0.11"/><rect x="558" y="41" width="1" height="1" fill="#fff" opacity="0.18"/><rect x="84" y="413" width="1" height="1" fill="#fff" opacity="0.16"/><rect x="281" y="43" width="1" height="1" fill="#fff" opacity="0.66"/><rect x="42" y="102" width="2" height="2" fill="#fff" opacity="0.92"/><rect x="3" y="257" width="1" height="1" fill="#fff" opacity="0.55"/><rect x="106" y="549" width="1" height="1" fill="#fff" opacity="0.03"/><rect x="134" y="507" width="1" height="1" fill="#fff" opacity="0.09"/><rect x="1012" y="145" width="1" height="1" fill="#fff" opacity="0.28"/><rect x="211" y="331" width="1" height="1" fill="#fff" opacity="0.22"/><rect x="121" y="142" width="1" height="1" fill="#fff" opacity="0.44"/><rect x="132" y="260" width="1" height="1" fill="#fff" opacity="0.32"/><rect x="92" y="37" width="1" height="1" fill="#fff" opacity="0.31"/><rect x="15" y="505" width="1" height="1" fill="#fff" opacity="0.13"/><rect x="117" y="352" width="1" height="1" fill="#fff" opacity="0.33"/><rect x="148" y="61" width="1" height="1" fill="#fff" opacity="0.18"/></svg>
<div id="taskbar"></div>
<div class="btn" style="left:2px;top:2px;width:62px;height:22px"></div>
<div class="abs" style="left:71px;top:3px;width:3px;height:21px;border-left:1px solid #fff;border-right:1px solid #808080"></div>
<div class="btn" style="left:78px;top:2px;width:160px;height:22px"></div>
<div class="btn" style="left:241px;top:2px;width:160px;height:22px"></div>
<div class="btn" style="left:404px;top:2px;width:160px;height:22px"></div>
<div class="abs" style="left:752px;top:3px;width:3px;height:21px;border-left:1px solid #fff;border-right:1px solid #808080"></div>
<div class="abs" style="left:827px;top:3px;width:2px;height:21px;border-left:1px solid #808080;border-right:1px solid #fff"></div>
<div class="sunk" style="left:872px;top:2px;width:149px;height:23px"></div>
<svg width="1024" height="28" viewBox="0 0 1024 28"><g transform="translate(4.5,4.5) scale(0.95,0.86)"><path d="M2 2 q3 -2 6 0 l-1 6 q-3 -2 -6 0z" fill="#e8442a"/><path d="M9 2.5 q3 2 6 0 l-1 6 q-3 2 -6 0z" fill="#5cb83c"/><path d="M0.8 9.5 q3 -2 6 0 l-1 6 q-3 -2 -6 0z" fill="#3a6ed8"/><path d="M7.8 10 q3 2 6 0 l-1 6 q-3 2 -6 0z" fill="#f4c61e"/></g><text x="22" y="17.2" font-size="12" font-weight="bold" fill="#000" textLength="38.5" lengthAdjust="spacingAndGlyphs" >スタート</text><g transform="translate(82,4)"><rect x="0.500" y="0" width="15" height="16" fill="#101010"/><path d="M2 1.500h12M2 14.500h12" stroke="#e8e8d0" stroke-width="1.200" stroke-dasharray="1.300 1.100"/><path d="M3 3l10.500 5l-10.500 5z" fill="#f4f080" stroke="#a8a040" stroke-width="0.500"/><path d="M5 8h4M7 6v4" stroke="#000" stroke-width="1.300"/><path d="M-1 5.500h4M13 8h3.500" stroke="#e02020" stroke-width="1"/><path d="M0 10.500h3" stroke="#2030d0" stroke-width="1.200"/></g><g transform="translate(245,4)"><rect x="0.500" y="0" width="15" height="16" fill="#101010"/><path d="M2 1.500h12M2 14.500h12" stroke="#e8e8d0" stroke-width="1.200" stroke-dasharray="1.300 1.100"/><path d="M3 3l10.500 5l-10.500 5z" fill="#f4f080" stroke="#a8a040" stroke-width="0.500"/><path d="M5 8h4M7 6v4" stroke="#000" stroke-width="1.300"/><path d="M-1 5.500h4M13 8h3.500" stroke="#e02020" stroke-width="1"/><path d="M0 10.500h3" stroke="#2030d0" stroke-width="1.200"/></g><g transform="translate(408,4)"><rect x="0.500" y="0" width="15" height="16" fill="#101010"/><path d="M2 1.500h12M2 14.500h12" stroke="#e8e8d0" stroke-width="1.200" stroke-dasharray="1.300 1.100"/><path d="M3 3l10.500 5l-10.500 5z" fill="#f4f080" stroke="#a8a040" stroke-width="0.500"/><path d="M5 8h4M7 6v4" stroke="#000" stroke-width="1.300"/><path d="M-1 5.500h4M13 8h3.500" stroke="#e02020" stroke-width="1"/><path d="M0 10.500h3" stroke="#2030d0" stroke-width="1.200"/></g><text x="102" y="17.5" font-size="12" font-weight="normal" fill="#000" textLength="45.0" lengthAdjust="spacingAndGlyphs" >LabVIEW</text><text x="265" y="17.5" font-size="12" font-weight="normal" fill="#000" textLength="52.0" lengthAdjust="spacingAndGlyphs" >tester01.vi</text><text x="428" y="17.5" font-size="12" font-weight="normal" fill="#000" textLength="111.0" lengthAdjust="spacingAndGlyphs" >tester01.vi ダイアグラム</text><g transform="translate(763,8)"><rect x="0.500" y="4" width="15" height="9" rx="2" fill="#fff" stroke="#111" stroke-width="1.200"/><path d="M2.5 6.5h1M4.0 6.5h1M5.5 6.5h1M7.0 6.5h1M8.5 6.5h1M10.0 6.5h1M11.5 6.5h1M13.0 6.5h1M2.5 8.5h1M4.0 8.5h1M5.5 8.5h1M7.0 8.5h1M8.5 8.5h1M10.0 8.5h1M11.5 8.5h1M13.0 8.5h1M2.5 10.5h1M4.0 10.5h1M5.5 10.5h1M7.0 10.5h1M8.5 10.5h1M10.0 10.5h1M11.5 10.5h1M13.0 10.5h1" stroke="#222" stroke-width="1.300"/><path d="M4 2.500q0.800 -2 1.600 0t1.600 0t1.600 0t1.600 0t1.600 0" fill="none" stroke="#111" stroke-width="0.900"/></g><text x="793.3" y="20.5" font-size="20" font-weight="normal" fill="#111" textLength="8.0" lengthAdjust="spacingAndGlyphs" >A</text><g transform="translate(807,5)"><path d="M1 9l9 -4.500l6 2v6.500l-9 4.500l-6 -2z" fill="#c89cc8"/><path d="M7 11.500v6.500l9 -4.500v-6.500z" fill="#b888bc"/><path d="M1 9l9 -4.500l6 2l-9 4.500z" fill="#f0e4e0"/><path d="M1 9l6 2.500l9 -4.500M7 11.500v6.500" fill="none" stroke="#8a6090" stroke-width="0.600"/><path d="M5.500 6.500q3 -4.500 7.500 -1.500" fill="none" stroke="#2a202a" stroke-width="1.600"/><path d="M8 9l3 -1.500" stroke="#503850" stroke-width="1.400"/></g><text x="831.5" y="10.8" font-size="6.5" font-weight="bold" fill="#222" textLength="19.5" lengthAdjust="spacingAndGlyphs" >CAPS</text><text x="831.5" y="21.6" font-size="6.5" font-weight="bold" fill="#222" textLength="19.5" lengthAdjust="spacingAndGlyphs" >KANA</text><path d="M860.5 5.500h5v3h-5z M858.500 7.500h5v3h-5z" fill="#d4d0c8" stroke="#222" stroke-width="1"/><path d="M858.500 17.500h6l-3 3z" fill="#111"/><g transform="translate(876,5)"><circle cx="5" cy="4" r="2.6" fill="#5aa0e0"/><circle cx="10" cy="6" r="2.6" fill="#3c9c4c"/><path d="M1 14 q4 -8 8 0z" fill="#4a8ad8"/><path d="M6 15 q4 -8 8 0z" fill="#48a858"/><circle cx="11.500" cy="12" r="3.800" fill="#e03020" stroke="#fff" stroke-width="0.8"/><path d="M10 10.500l3 3m0 -3l-3 3" stroke="#fff" stroke-width="1.200"/></g><g transform="translate(893,5)"><circle cx="6.500" cy="7" r="6" fill="#909090" stroke="#404040"/><circle cx="6.500" cy="7" r="3" fill="#d8d8d8" stroke="#505050" stroke-width="0.800"/><path d="M12 11q3 -1 3 -5M11 14q6 -2 6 -8" stroke="#4868c0" fill="none"/></g><g transform="translate(911,5)"><path d="M0 14 l4 -11 h13 l-2 11z" fill="#d81818"/></g><text x="915" y="17" font-size="9" font-weight="bold" fill="#fff" textLength="12.0" lengthAdjust="spacingAndGlyphs" font-style="italic">ATi</text><g transform="translate(930,4)"><path d="M3 8 l8 -3 l4 5 l-8 5z" fill="#c8c8c8" stroke="#505050" stroke-width="0.800"/><path d="M5 9l6 -2.500 l2 2.500 l-6 3z" fill="#385898"/><path d="M2 1 h6 v3 h3 l-5 5 l-5 -5 h3z" fill="#38b838" stroke="#186818" stroke-width="0.600" transform="rotate(-30 6 5)"/></g><g transform="translate(947,4)"><rect x="1" y="1" width="6" height="6" fill="#a8a8a8" stroke="#505050" stroke-width="0.800"/><rect x="9" y="1" width="6" height="6" fill="#a8a8a8" stroke="#505050" stroke-width="0.800"/><rect x="4.500" y="11" width="7" height="6" fill="#a8a8a8" stroke="#505050" stroke-width="0.800"/><path d="M4 7v3h8v-3M8 8v4" stroke="#505050" fill="none"/><circle cx="8" cy="9" r="3" fill="#1030e0"/></g><g transform="translate(967,4)"><rect x="1.500" y="3" width="9" height="14" rx="1.500" fill="#2038c8" stroke="#101860"/><rect x="4" y="1" width="4" height="2" fill="#c02020"/><path d="M4 5v10" stroke="#8898f0" stroke-width="1.500"/><rect x="7" y="5" width="2" height="3" fill="#e02020"/></g><text x="987" y="18" font-size="12" font-weight="normal" fill="#000" textLength="26.0" lengthAdjust="spacingAndGlyphs" >12:57</text></svg>
<svg width="214" height="600" viewBox="0 0 214 600"><defs><filter id="sh" x="-10%" y="-20%" width="130%" height="150%"><feDropShadow dx="1" dy="1" stdDeviation="0.35" flood-color="#000" flood-opacity="0.85"/></filter></defs><g transform="translate(22,32)"><defs><linearGradient id="scr" x1="0" y1="0" x2="1" y2="1"><stop offset="0" stop-color="#4aa8f0"/><stop offset="1" stop-color="#a8dcff"/></linearGradient></defs><path d="M19 6.500L27 3.500L32 6V21L25.500 25.500L19 22.500Z" fill="#c4c6e8"/><path d="M25.500 9L32 6V21L25.500 25.500Z" fill="#b4b4dc"/><path d="M19 6.500L27 3.500L32 6L25.500 9Z" fill="#e4e6f8"/><path d="M26.500 12l4.500 -2M26.500 15l4.500 -2" stroke="#8c8cc0" stroke-width="0.800"/><ellipse cx="10.500" cy="26.500" rx="9.700" ry="4.400" fill="#dcdcf4"/><ellipse cx="10.500" cy="27.300" rx="9.700" ry="3.600" fill="#c4c4e4" opacity="0.600"/><path d="M9.500 19L15.500 18V27.500L9.500 27.500Z" fill="#b4b6e0"/><path d="M0.800 4.500L17.500 1L20.800 17.500L5 22.500Z" fill="#ccd4f4" stroke="#a8b0dc" stroke-width="0.600"/><path d="M3 6L16.500 3.200L18.800 16.500L6.300 20.300Z" fill="url(#scr)"/></g><text x="32.5" y="77.5" font-size="12" font-weight="normal" fill="#fff" textLength="12.0" lengthAdjust="spacingAndGlyphs" filter="url(#sh)">pc</text><g transform="translate(101,32)"><rect x="3" y="1" width="26" height="30" fill="#58dce4"/><rect x="5" y="3" width="22" height="26" fill="#d8f8f8"/><path d="M6 6h20M6 9h20M6 12h20M6 15h20M6 18h20M6 21h20M6 24h20M6 27h20" stroke="#58dce4" stroke-width="0.800"/><path d="M17 -0.500L32 18L15 32L0 12Z" fill="#1428e0"/><text x="16.500" y="26" font-size="27" font-weight="900" text-anchor="middle" fill="#f4f020" style="font-family:'Noto Serif CJK JP','Noto Sans CJK JP',serif">秀</text><g transform="translate(0.200,0)"><rect x="0" y="21" width="10.500" height="10.500" fill="#fff" stroke="#222" stroke-width="0.600"/><path d="M2.500 29.500c0.500 -3 1.500 -4 4 -4.300" fill="none" stroke="#000" stroke-width="1.800"/><path d="M4.500 23h4.500v4.500z" fill="#000"/></g></g><text x="94" y="77.5" font-size="12" font-weight="normal" fill="#fff" textLength="46.0" lengthAdjust="spacingAndGlyphs" filter="url(#sh)">Hidemaru</text><g transform="translate(22,113)"><defs><linearGradient id="bin" x1="0" y1="0" x2="1" y2="0"><stop offset="0" stop-color="#b8d4f4"/><stop offset="0.500" stop-color="#eef6ff"/><stop offset="1" stop-color="#a8c8f0"/></linearGradient></defs><path d="M2.600 7.500Q14 9 29.500 0.500L25.500 23Q17 30.500 7.500 26.500Z" fill="url(#bin)" opacity="0.920"/><path d="M2.600 7.500Q6 1.500 29.500 0.500Q20 9.500 2.600 7.500Z" fill="#d4e6fc" stroke="#f4faff" stroke-width="0.800"/><ellipse cx="16" cy="24" rx="8.500" ry="3.200" fill="#cfe2fa" transform="rotate(-8 16 24)"/><g transform="translate(-2.500,-3.500) scale(1.220)"><path d="M14.500 12.500q3 -4 7 -1l1.200 -1.500l0.500 5.500l-5 -0.800l1.400 -1.300q-2 -1.500 -3.600 0.600z" fill="#28a838"/><path d="M22.500 19q-3 4.500 -7.500 1.500l-1.300 1.500l-0.500 -5.500l5 0.800l-1.400 1.300q2.200 1.300 3.800 -0.800z" fill="#28a838"/></g></g><text x="22.5" y="158.5" font-size="12" font-weight="normal" fill="#fff" textLength="32.0" lengthAdjust="spacingAndGlyphs" filter="url(#sh)">ごみ箱</text><g transform="translate(101,113)"><path d="M23 13h9v14l-6 4h-3z" fill="#a01818" opacity="0.850"/><path d="M0.500 10L7 3.500L11 12.500L4 18Z" fill="#d8d040"/><path d="M21 12.500L30 4L28 8L26.500 27L21 31Z" fill="#a09838"/><path d="M4 17.500H21V31H4Z" fill="#e4dc48"/><rect x="9" y="1" width="11" height="15" fill="#50e0e8" stroke="#208890" stroke-width="0.600"/><path d="M10.500 4h8M10.500 6.500h8M10.500 9h8M10.500 11.500h8M10.500 14h8" stroke="#186870" stroke-width="1"/><rect x="10" y="22" width="7" height="8" fill="#fff"/><text x="11" y="29.500" font-size="8" font-weight="bold" fill="#2020c0">c</text><g transform="translate(0.200,0)"><rect x="0" y="21" width="10.500" height="10.500" fill="#fff" stroke="#222" stroke-width="0.600"/><path d="M2.500 29.500c0.500 -3 1.500 -4 4 -4.300" fill="none" stroke="#000" stroke-width="1.800"/><path d="M4.500 23h4.500v4.500z" fill="#000"/></g></g><text x="99.5" y="158.5" font-size="12" font-weight="normal" fill="#fff" textLength="35.0" lengthAdjust="spacingAndGlyphs" filter="url(#sh)">LHmelt</text><g transform="translate(22,194)"><defs><linearGradient id="scr2" x1="0" y1="0" x2="1" y2="1"><stop offset="0" stop-color="#4aa8f0"/><stop offset="1" stop-color="#a8dcff"/></linearGradient></defs><path d="M19 6.500L27 3.500L32 6V21L25.500 25.500L19 22.500Z" fill="#c4c6e8"/><path d="M25.500 9L32 6V21L25.500 25.500Z" fill="#b4b4dc"/><path d="M19 6.500L27 3.500L32 6L25.500 9Z" fill="#e4e6f8"/><path d="M26.500 12l4.500 -2M26.500 15l4.500 -2" stroke="#8c8cc0" stroke-width="0.800"/><ellipse cx="10.500" cy="26.500" rx="9.700" ry="4.400" fill="#dcdcf4"/><ellipse cx="10.500" cy="27.300" rx="9.700" ry="3.600" fill="#c4c4e4" opacity="0.600"/><path d="M9.500 19L15.500 18V27.500L9.500 27.500Z" fill="#b4b6e0"/><path d="M0.800 4.500L17.500 1L20.800 17.500L5 22.500Z" fill="#ccd4f4" stroke="#a8b0dc" stroke-width="0.600"/><path d="M3 6L16.500 3.200L18.800 16.500L6.300 20.300Z" fill="url(#scr2)"/><g transform="translate(1.200,0)"><rect x="0" y="21" width="10.500" height="10.500" fill="#fff" stroke="#222" stroke-width="0.600"/><path d="M2.500 29.500c0.500 -3 1.500 -4 4 -4.300" fill="none" stroke="#000" stroke-width="1.800"/><path d="M4.500 23h4.500v4.500z" fill="#000"/></g></g><text x="19" y="239.5" font-size="12" font-weight="normal" fill="#fff" textLength="39.5" lengthAdjust="spacingAndGlyphs" filter="url(#sh)">Explorer</text><g transform="translate(101,194)"><path d="M4 6Q-1 14 5 23L9 21Q4 14 7 7Z" fill="#f0e020"/><circle cx="17.200" cy="15.500" r="14.600" fill="#1020c8"/><path d="M5 9Q9 4 13 5L23 16L27 4.500Q24 4 21 5L24 6L22 12L15 4Q9 3 5 9Z" fill="#fff"/><path d="M11 5L23 17L20 21L8 8Z" fill="#fff"/><path d="M11 24Q15 28 21 26.500L21 29L28 24.500L21 20L21 22.500Q16 24 13 21Z" fill="#f4e820"/><g transform="translate(0.200,0)"><rect x="0" y="21" width="10.500" height="10.500" fill="#fff" stroke="#222" stroke-width="0.600"/><path d="M2.500 29.500c0.500 -3 1.500 -4 4 -4.300" fill="none" stroke="#000" stroke-width="1.800"/><path d="M4.500 23h4.500v4.500z" fill="#000"/></g></g><text x="97" y="239.5" font-size="12" font-weight="normal" fill="#fff" textLength="41.0" lengthAdjust="spacingAndGlyphs" filter="url(#sh)">Measure</text><g transform="translate(22,275)"><rect x="1.500" y="0.300" width="30" height="31.400" fill="#0c0c0c"/><path d="M5 3.500h24M5 28.500h24" stroke="#d8d8c8" stroke-width="2.600" stroke-dasharray="2.600 2.400"/><path d="M0 14Q3 3 6 14T12 14T18 14" fill="none" stroke="#30c840" stroke-width="1.300" transform="translate(0,2)"/><path d="M12 16Q15 5 18 16T24 16T30 16T33 12" fill="none" stroke="#30c840" stroke-width="1.300" transform="translate(0,0)"/><path d="M0 15h11" stroke="#c83030" stroke-width="2.600"/><path d="M24 19h8" stroke="#c83030" stroke-width="2.400"/><path d="M11 10.500L27 19L11 27.500Z" fill="#f8f480" stroke="#b0a840" stroke-width="0.600"/><path d="M13.500 19h6M16.500 16v6" stroke="#000" stroke-width="1.800"/><g transform="translate(1.200,0)"><rect x="0" y="21" width="10.500" height="10.500" fill="#fff" stroke="#222" stroke-width="0.600"/><path d="M2.500 29.500c0.500 -3 1.500 -4 4 -4.300" fill="none" stroke="#000" stroke-width="1.800"/><path d="M4.500 23h4.500v4.500z" fill="#000"/></g></g><text x="17.5" y="320.5" font-size="12" font-weight="normal" fill="#fff" textLength="43.5" lengthAdjust="spacingAndGlyphs" filter="url(#sh)">LabVIEW</text><g transform="translate(101,275)"><path d="M0.500 0.500H18L24.500 7V31.500H0.500Z" fill="#fdfdfd" stroke="#303030" stroke-width="0.800"/><path d="M18 0.500V7H24.500Z" fill="#c8c8c8" stroke="#303030" stroke-width="0.600"/><rect x="3.500" y="10" width="17" height="11" fill="#d0d0d0" stroke="#404040" stroke-width="0.700"/><rect x="4.500" y="13.500" width="11" height="5.500" fill="#082808"/><path d="M5 17q1.500 -4 3 0t3 0t3 0" fill="none" stroke="#40e040" stroke-width="0.900"/><rect x="4.500" y="11" width="2.400" height="1.800" fill="#30c030"/><rect x="7.800" y="11" width="2.400" height="1.800" fill="#d03030"/><rect x="11" y="11" width="2.400" height="1.800" fill="#202020"/><path d="M17 12h3M17 15h3M17 18h3" stroke="#606060" stroke-width="1"/><path d="M20 20L28 24.500L20 29Z" fill="#f4f060" stroke="#a09830" stroke-width="0.600"/><path d="M21.500 24.500h3M23 23v3" stroke="#000" stroke-width="0.900"/><path d="M17 22.500h3M27.500 24.500h3" stroke="#e02020" stroke-width="1"/><path d="M16.500 27h3.500" stroke="#2030d0" stroke-width="1"/><g transform="translate(0.200,0)"><rect x="0" y="21" width="10.500" height="10.500" fill="#fff" stroke="#222" stroke-width="0.600"/><path d="M2.500 29.500c0.500 -3 1.500 -4 4 -4.300" fill="none" stroke="#000" stroke-width="1.800"/><path d="M4.500 23h4.500v4.500z" fill="#000"/></g></g><path d="M94 310.5H140M95 324.5H140" stroke="#e0e0e0" stroke-width="1" stroke-dasharray="1 1" fill="none"/><path d="M94.500 311V325M139.500 310V325" stroke="#e0e0e0" stroke-width="1" stroke-dasharray="1 1" fill="none"/><text x="96.5" y="320.5" font-size="12" font-weight="normal" fill="#fff" textLength="39.5" lengthAdjust="spacingAndGlyphs" filter="url(#sh)">tester01</text><g transform="translate(22,356)"><g transform="translate(1.200,0)"><rect x="0.500" y="0.500" width="31" height="31" fill="#0a2c9c" stroke="#c8d8e8" stroke-width="1"/><rect x="1.500" y="1.500" width="29" height="6" fill="#0c5c6c" opacity="0.900"/><rect x="1.500" y="7.500" width="29" height="14" fill="#1040b8" opacity="0.800"/><path d="M1.500 22.500Q16 17.500 30.500 24V30.500H1.500Z" fill="#000"/><path d="M11 20.500Q19 17.800 29 22.500" fill="none" stroke="#58b0f8" stroke-width="1.300"/><text x="5.500" y="21.500" font-size="24" font-weight="bold" textLength="21" lengthAdjust="spacingAndGlyphs" fill="#fff" style="font-family:'Liberation Serif',serif">N</text></g><g transform="translate(1.200,0)"><rect x="0" y="21" width="10.500" height="10.500" fill="#fff" stroke="#222" stroke-width="0.600"/><path d="M2.500 29.500c0.500 -3 1.500 -4 4 -4.300" fill="none" stroke="#000" stroke-width="1.800"/><path d="M4.500 23h4.500v4.500z" fill="#000"/></g></g><text x="15.5" y="401.5" font-size="12" font-weight="normal" fill="#fff" textLength="46.5" lengthAdjust="spacingAndGlyphs" filter="url(#sh)">Netscape</text><g transform="translate(22,437)"><path d="M7.500 5L12 19L14 18.500L10.500 4.500Z" fill="#6868c8"/><path d="M5.500 1Q8 -0.500 11 1.500L10.500 6L7 6Z" fill="#c04820"/><path d="M16 3L18.500 9V26H14V9Z" fill="#f0c818"/><path d="M16 3L17.200 6H14.800Z" fill="#f8e8b0"/><path d="M24.500 1.500L26 6L20 27L16.500 26L22.500 6.500Z" fill="#f05818"/><path d="M24.500 1.500L26 6L22.500 6.500Z" fill="#c8d0f0"/><path d="M11 16L14 26L17 26L13 15Z" fill="#30a830"/><path d="M6.500 13.500Q16 17 25 13L22 28Q16 31 10 28Z" fill="#c8e0f8" opacity="0.360"/><path d="M6.500 13.500Q16 17 25 13" fill="none" stroke="#e8f4ff" stroke-width="1"/><path d="M10 28Q16 31 22 28" fill="none" stroke="#e0ecfc" stroke-width="1.200"/><g transform="translate(1.200,0)"><rect x="0" y="21" width="10.500" height="10.500" fill="#fff" stroke="#222" stroke-width="0.600"/><path d="M2.500 29.500c0.500 -3 1.500 -4 4 -4.300" fill="none" stroke="#000" stroke-width="1.800"/><path d="M4.500 23h4.500v4.500z" fill="#000"/></g></g><text x="15.5" y="482.5" font-size="12" font-weight="normal" fill="#fff" textLength="47.0" lengthAdjust="spacingAndGlyphs" filter="url(#sh)">PaintTool</text><g transform="translate(22,518)"><g transform="translate(2.500,1.500)"><path d="M1 2.500Q1 1 2.500 1H6L7.500 2.500H13.500V10.500H1Z" fill="#e8e878" stroke="#a8a840" stroke-width="0.500"/><path d="M14 2v9.500H2" fill="none" stroke="#181818" stroke-width="1"/></g><rect x="4" y="16" width="9" height="13" fill="#e8e8e8" stroke="#404040" stroke-width="0.600"/><rect x="7" y="18" width="8" height="12" fill="#fafafa" stroke="#303030" stroke-width="0.600"/><path d="M5 17.500h6" stroke="#505050" stroke-width="1" stroke-dasharray="1 1"/><text transform="translate(32,30.500) rotate(-90)" font-size="18" fill="#f4f4f4" stroke="#101010" stroke-width="1" paint-order="stroke" textLength="26.500" lengthAdjust="spacingAndGlyphs">FTP</text><g transform="translate(1.200,0)"><rect x="0" y="21" width="10.500" height="10.500" fill="#fff" stroke="#222" stroke-width="0.600"/><path d="M2.500 29.500c0.500 -3 1.500 -4 4 -4.300" fill="none" stroke="#000" stroke-width="1.800"/><path d="M4.500 23h4.500v4.500z" fill="#000"/></g></g><text x="16.5" y="563.5" font-size="12" font-weight="normal" fill="#fff" textLength="43.5" lengthAdjust="spacingAndGlyphs" filter="url(#sh)">CuteFTP</text></svg>
<div id="win"></div><div id="title"></div>
<div class="btn" style="left:948px;top:52px;width:16px;height:14px"></div>
<div class="btn" style="left:964px;top:52px;width:16px;height:14px"></div>
<div class="btn" style="left:982px;top:52px;width:16px;height:14px"></div>
<div class="abs" style="left:217px;top:69px;width:783px;height:512px;border:1px solid;border-color:#808080 #fff #fff #808080"></div>
<div class="abs" style="left:218px;top:70px;width:781px;height:510px;border:1px solid;border-color:#404040 #d4d0c8 #d4d0c8 #404040"></div>
<div class="abs" style="left:217px;top:86px;width:747px;height:2px;border-top:1px solid #808080;border-bottom:1px solid #fff"></div>
<div class="abs" style="left:249px;top:90px;width:22px;height:21px;background:#dedbd4;border:1px solid #505050;box-shadow:inset 1px 1px 0 #fff,inset -1px -1px 0 #a0a09a"></div>
<div class="abs" style="left:270px;top:90px;width:22px;height:21px;background:#dedbd4;border:1px solid #505050;box-shadow:inset 1px 1px 0 #fff,inset -1px -1px 0 #a0a09a"></div>
<div class="abs" style="left:317px;top:90px;width:22px;height:21px;background:#dedbd4;border:1px solid #505050;box-shadow:inset 1px 1px 0 #fff,inset -1px -1px 0 #a0a09a"></div>
<div class="abs" style="left:963px;top:70px;width:36px;height:43px;background:#fff;border-left:1px solid #404040"></div>
<div id="content"></div>
<div class="abs" style="left:982px;top:113px;width:16px;height:450px;background:#d9d6cf"></div>
<div class="btn" style="left:982px;top:113px;width:16px;height:16px"></div>
<div class="btn" style="left:982px;top:548px;width:16px;height:15px"></div>
<div class="btn" style="left:982px;top:193px;width:16px;height:284px"></div>
<div class="abs" style="left:219px;top:563px;width:763px;height:16px;background:#d9d6cf"></div>
<div class="btn" style="left:219px;top:563px;width:16px;height:16px"></div>
<div class="btn" style="left:966px;top:563px;width:16px;height:16px"></div>
<div class="btn" style="left:347px;top:563px;width:506px;height:16px"></div>
<div class="abs" style="left:982px;top:563px;width:16px;height:16px;background:#d4d0c8"></div>
<svg width="1024" height="600" viewBox="0 0 1024 600"><g transform="translate(219,51)"><rect x="0.500" y="0" width="15" height="16" fill="#101010"/><path d="M2 1.500h12M2 14.500h12" stroke="#e8e8d0" stroke-width="1.200" stroke-dasharray="1.300 1.100"/><path d="M3 3l10.500 5l-10.500 5z" fill="#f4f080" stroke="#a8a040" stroke-width="0.500"/><path d="M5 8h4M7 6v4" stroke="#000" stroke-width="1.300"/><path d="M-1 5.500h4M13 8h3.500" stroke="#e02020" stroke-width="1"/><path d="M0 10.500h3" stroke="#2030d0" stroke-width="1.200"/></g><text x="237.5" y="63.5" font-size="13" font-weight="bold" fill="#d8d4cc" textLength="63.0" lengthAdjust="spacingAndGlyphs" >tester01.vi</text><rect x="952" y="61" width="6" height="2" fill="#000"/><rect x="967.500" y="55.500" width="9" height="8" fill="none" stroke="#000"/><rect x="967" y="55" width="10" height="2" fill="#000"/><path d="M985.500 55.500l8 7m0 -7l-8 7" stroke="#000" stroke-width="1.600"/><text x="222" y="82.8" font-size="12" font-weight="normal" fill="#000" textLength="50.0" lengthAdjust="spacingAndGlyphs" >ファイル(<tspan text-decoration="underline">F</tspan>)</text><text x="280" y="82.8" font-size="12" font-weight="normal" fill="#000" textLength="38.0" lengthAdjust="spacingAndGlyphs" >編集(<tspan text-decoration="underline">E</tspan>)</text><text x="329" y="82.8" font-size="12" font-weight="normal" fill="#000" textLength="38.0" lengthAdjust="spacingAndGlyphs" >操作(<tspan text-decoration="underline">O</tspan>)</text><text x="377" y="82.8" font-size="12" font-weight="normal" fill="#000" textLength="45.0" lengthAdjust="spacingAndGlyphs" >ツール(<tspan text-decoration="underline">T</tspan>)</text><text x="431" y="82.8" font-size="12" font-weight="normal" fill="#000" textLength="39.0" lengthAdjust="spacingAndGlyphs" >参照(<tspan text-decoration="underline">B</tspan>)</text><text x="479" y="82.8" font-size="12" font-weight="normal" fill="#000" textLength="61.0" lengthAdjust="spacingAndGlyphs" >ウィンドウ(<tspan text-decoration="underline">W</tspan>)</text><text x="549" y="82.8" font-size="12" font-weight="normal" fill="#000" textLength="45.0" lengthAdjust="spacingAndGlyphs" >ヘルプ(<tspan text-decoration="underline">H</tspan>)</text><path d="M261.500 94.300L268 100.500L261.500 106.700V102.700H257.200V98.300H261.500Z" fill="#000"/><path d="M253.500 98v5M255.500 98v5M257.700 94.200v3M259.700 94.200v3M257.700 104v3M259.700 104v3" stroke="#000" stroke-width="1.100"/><path d="M277 94.500H285.500V98.200H289L284.300 103.600L279.600 98.200H282.500V97.200H277Z" fill="#000"/><path d="M286 107H277.500V103.300H274L278.700 97.900L283.400 103.300H280.500V104.300H286Z" fill="#000"/><rect x="323" y="95" width="4" height="9.600" fill="#d01010"/><rect x="329.200" y="95" width="4" height="9.600" fill="#d01010"/><g transform="translate(966,75)"><rect x="0.500" y="0.500" width="31" height="31" fill="#c4c4c4" stroke="#101010" stroke-width="1.100"/><rect x="2" y="2.500" width="22.500" height="11.500" fill="#080808"/><path d="M2 8Q5 1.500 8.500 8T15 8T21.500 8T24.500 6" fill="none" stroke="#48e058" stroke-width="1"/><rect x="2" y="15" width="22.500" height="11" fill="#080808"/><path d="M4 25v-9M6.500 25v-6M9 25v-4M11.500 25v-5M14 25v-4M16.500 25v-3.500M19 25v-3M21.500 25v-2" stroke="#f8f028" stroke-width="1.100"/><path d="M3 25.300h21" stroke="#f0e828" stroke-width="0.800"/><ellipse cx="28" cy="5.500" rx="1.700" ry="1.700" fill="#808080"/><ellipse cx="28" cy="12" rx="2" ry="3" fill="#808080"/><ellipse cx="28" cy="20" rx="2" ry="3" fill="#808080"/><rect x="3" y="27.500" width="4.500" height="2" fill="#808080"/><rect x="9.500" y="27.500" width="8.500" height="2" fill="#808080"/><rect x="20" y="27.500" width="3.500" height="2" fill="#808080"/><ellipse cx="27.500" cy="28.500" rx="2.500" ry="1.600" fill="#e01818"/></g><path d="M986.500 123h7l-3.500 -4z" fill="#000"/><path d="M986.500 554h7l-3.500 4z" fill="#000"/><path d="M228.500 567.500v7l-4 -3.500z" fill="#000"/><path d="M972.500 567.500v7l4 -3.500z" fill="#000"/><path d="M985 578l12 -12M989 578l8 -8M993 578l4 -4" stroke="#808080" stroke-width="1.200"/><path d="M986 578l11 -11M990 578l7 -7M994 578l3 -3" stroke="#fff" stroke-width="0.800"/></svg>
<svg width="1024" height="600" viewBox="0 0 1024 600"><path d="M595.500 126V531.500M244 311.500H596M244 531.500H596M962.500 126V531.500M611 311.500H963M611 531.500H963" stroke="#7a7a7a" stroke-width="1" fill="none"/><rect x="282" y="136" width="292.5" height="159.3" fill="#f6fff6"/><path d="M292.5 136V295.3M300.5 136V295.3M309.5 136V295.3M317.5 136V295.3M326.5 136V295.3M334.5 136V295.3M343.5 136V295.3M351.5 136V295.3M360.5 136V295.3M368.5 136V295.3M377.5 136V295.3M385.5 136V295.3M394.5 136V295.3M402.5 136V295.3M411.5 136V295.3M419.5 136V295.3M428.5 136V295.3M436.5 136V295.3M445.5 136V295.3M453.5 136V295.3M462.5 136V295.3M470.5 136V295.3M479.5 136V295.3M487.5 136V295.3M496.5 136V295.3M504.5 136V295.3M513.5 136V295.3M521.5 136V295.3M530.5 136V295.3M538.5 136V295.3M547.5 136V295.3M555.5 136V295.3M564.5 136V295.3M572.5 136V295.3" stroke="#d0f3f6" stroke-width="1" fill="none"/><path d="M282 290.5H574.5M282 285.5H574.5M282 280.5H574.5M282 275.5H574.5M282 269.5H574.5M282 264.5H574.5M282 259.5H574.5M282 254.5H574.5M282 249.5H574.5M282 244.5H574.5M282 239.5H574.5M282 234.5H574.5M282 229.5H574.5M282 224.5H574.5M282 218.5H574.5M282 213.5H574.5M282 208.5H574.5M282 203.5H574.5M282 198.5H574.5M282 193.5H574.5M282 188.5H574.5M282 183.5H574.5M282 178.5H574.5M282 173.5H574.5M282 167.5H574.5M282 162.5H574.5M282 157.5H574.5M282 152.5H574.5M282 147.5H574.5M282 142.5H574.5" stroke="#aee6b2" stroke-width="1" fill="none"/><path d="M368.5 136V295.3M453.5 136V295.3M538.5 136V295.3" stroke="#9eeee2" stroke-width="1.2" fill="none"/><path d="M282 157.5H574.5M282 178.5H574.5M282 198.5H574.5M282 218.5H574.5M282 239.5H574.5M282 259.5H574.5M282 280.5H574.5" stroke="#38bc40" stroke-width="1.5" fill="none"/><path d="M282.5 295.3V136.5H574.5" stroke="#3f8f82" stroke-width="1" fill="none"/><text x="247.3" y="141.6" font-size="12" font-weight="normal" fill="#000" textLength="25.7" lengthAdjust="spacingAndGlyphs" >10.00</text><text x="253.2" y="162.0" font-size="12" font-weight="normal" fill="#000" textLength="19.8" lengthAdjust="spacingAndGlyphs" >8.00</text><text x="253.2" y="182.4" font-size="12" font-weight="normal" fill="#000" textLength="19.8" lengthAdjust="spacingAndGlyphs" >6.00</text><text x="253.2" y="202.8" font-size="12" font-weight="normal" fill="#000" textLength="19.8" lengthAdjust="spacingAndGlyphs" >4.00</text><text x="253.2" y="223.2" font-size="12" font-weight="normal" fill="#000" textLength="19.8" lengthAdjust="spacingAndGlyphs" >2.00</text><text x="253.2" y="243.6" font-size="12" font-weight="normal" fill="#000" textLength="19.8" lengthAdjust="spacingAndGlyphs" >0.00</text><text x="247.3" y="264.0" font-size="12" font-weight="normal" fill="#000" textLength="25.7" lengthAdjust="spacingAndGlyphs" >−2.00</text><text x="247.3" y="284.4" font-size="12" font-weight="normal" fill="#000" textLength="25.7" lengthAdjust="spacingAndGlyphs" >−4.00</text><text x="247.3" y="298.5" font-size="12" font-weight="normal" fill="#000" textLength="25.7" lengthAdjust="spacingAndGlyphs" >−5.42</text><path d="M276 137.5H281M276 157.5H281M276 178.5H281M276 198.5H281M276 218.5H281M276 239.5H281M276 259.5H281M276 280.5H281M276 294.5H281" stroke="#38bc40" stroke-width="1.5" fill="none"/><rect x="283" y="298" width="1" height="1" fill="#30b030"/><rect x="368" y="298" width="1" height="1" fill="#30b030"/><rect x="453" y="298" width="1" height="1" fill="#30b030"/><rect x="538" y="298" width="1" height="1" fill="#30b030"/><rect x="573" y="298" width="1" height="1" fill="#30b030"/><text x="273.1" y="310.3" font-size="12" font-weight="normal" fill="#000" textLength="19.8" lengthAdjust="spacingAndGlyphs" >0.00</text><text x="358.6" y="310.3" font-size="12" font-weight="normal" fill="#000" textLength="19.8" lengthAdjust="spacingAndGlyphs" >0.01</text><text x="443.6" y="310.3" font-size="12" font-weight="normal" fill="#000" textLength="19.8" lengthAdjust="spacingAndGlyphs" >0.02</text><text x="528.6" y="310.3" font-size="12" font-weight="normal" fill="#000" textLength="19.8" lengthAdjust="spacingAndGlyphs" >0.03</text><text x="563.1" y="310.3" font-size="12" font-weight="normal" fill="#000" textLength="19.8" lengthAdjust="spacingAndGlyphs" >0.03</text><clipPath id="c1"><rect x="282" y="137" width="292.5" height="158.3"/></clipPath><g clip-path="url(#c1)"><path d="M302.3 181.2 L302.9 179.8 L303.5 178.6 L304.2 177.3 L304.8 176.1 L305.4 174.9 L306.0 173.9 L306.6 172.8 L307.3 171.7 L307.9 170.6 L308.5 169.5 L309.1 168.4 L309.7 167.4 L310.4 166.5 L311.0 165.5 L311.6 164.5 L312.2 163.6 L312.8 162.8 L313.5 162.1 L314.1 161.3 L314.7 160.6 L315.3 159.9 L315.9 159.2 L316.6 159.0 L317.2 158.8 L317.8 158.7 L318.4 158.5 L319.0 158.4 L319.7 158.2 L320.3 158.0 L320.9 157.9 L321.5 156.3 L322.1 154.4 L322.1 168.8 L321.5 169.3 L320.9 169.7 L320.3 170.0 L319.7 170.3 L319.0 170.6 L318.4 170.9 L317.8 171.2 L317.2 171.4 L316.6 171.7 L315.9 171.9 L315.3 172.2 L314.7 172.5 L314.1 172.8 L313.5 173.1 L312.8 173.7 L312.2 174.4 L311.6 175.1 L311.0 175.8 L310.4 176.5 L309.7 177.3 L309.1 178.8 L308.5 180.3 L307.9 181.8 L307.3 183.3 L306.6 184.8 L306.0 186.3 L305.4 187.5 L304.8 188.6 L304.2 189.7 L303.5 190.8 L302.9 191.9 L302.3 194.8Z" fill="#e60606" stroke="#e60606" stroke-width="1.2" stroke-linejoin="round"/><path d="M302.3 180.4 L302.9 192.9 L303.5 176.8 L304.2 190.5 L304.8 175.2 L305.4 188.5 L306.0 173.7 L306.6 185.7 L307.3 170.6 L307.9 183.2 L308.5 169.5 L309.1 179.2 L309.7 167.4 L310.4 177.8 L311.0 164.4 L311.6 175.0 L312.2 161.9 L312.8 175.4 L313.5 161.0 L314.1 173.8 L314.7 160.5 L315.3 172.0 L315.9 158.2 L316.6 171.6 L317.2 158.6 L317.8 171.5 L318.4 158.7 L319.0 171.4 L319.7 157.5 L320.3 171.6 L320.9 157.0 L321.5 170.5 L322.1 153.4" fill="none" stroke="#e60606" stroke-width="1.1" stroke-linejoin="round" stroke-linecap="butt" /><path d="M444.5 181.0 L445.1 179.1 L445.7 177.5 L446.4 175.9 L447.0 174.3 L447.6 172.7 L448.2 171.6 L448.8 170.5 L449.5 169.4 L450.1 168.2 L450.7 167.1 L451.3 166.2 L451.9 165.4 L452.6 164.5 L453.2 163.7 L453.8 162.8 L454.4 162.2 L455.0 161.6 L455.7 161.0 L456.3 160.5 L456.9 159.9 L457.5 159.3 L458.1 158.8 L458.8 158.2 L459.4 157.7 L460.0 157.1 L460.6 156.5 L461.2 155.8 L461.9 155.2 L462.5 154.5 L463.1 153.0 L463.7 151.4 L463.7 164.8 L463.1 166.3 L462.5 167.8 L461.9 168.3 L461.2 168.7 L460.6 169.2 L460.0 169.6 L459.4 170.1 L458.8 170.5 L458.1 171.0 L457.5 171.4 L456.9 172.0 L456.3 172.5 L455.7 173.0 L455.0 173.6 L454.4 174.1 L453.8 174.6 L453.2 175.2 L452.6 175.9 L451.9 176.5 L451.3 177.1 L450.7 177.7 L450.1 178.8 L449.5 179.8 L448.8 180.9 L448.2 181.9 L447.6 182.9 L447.0 184.2 L446.4 185.4 L445.7 186.7 L445.1 188.0 L444.5 192.0Z" fill="#e60606" stroke="#e60606" stroke-width="1.2" stroke-linejoin="round"/><path d="M444.5 179.9 L445.1 188.5 L445.7 177.2 L446.4 187.0 L447.0 172.7 L447.6 184.3 L448.2 170.5 L448.8 181.2 L449.5 169.1 L450.1 179.1 L450.7 167.2 L451.3 178.3 L451.9 164.8 L452.6 177.3 L453.2 163.1 L453.8 176.4 L454.4 160.6 L455.0 173.3 L455.7 160.8 L456.3 174.2 L456.9 159.1 L457.5 173.3 L458.1 158.1 L458.8 170.5 L459.4 156.5 L460.0 171.1 L460.6 156.1 L461.2 168.7 L461.9 154.6 L462.5 169.9 L463.1 151.4 L463.7 164.8" fill="none" stroke="#e60606" stroke-width="1.1" stroke-linejoin="round" stroke-linecap="butt" /><path d="M282.5 243.0 L290.0 221.5 L297.0 201.5 L299.6 196.0 L300.4 158.5 L301.3 159.0 L302.0 207.5 L302.8 186.0 L312.0 168.0 L322.0 160.0 L323.1 150.0 L323.2 128.0 L326.3 128.0 L326.3 185.0 L327.3 179.5 L329.0 178.2 L331.0 179.5 L334.0 185.0 L338.5 195.0 L342.9 205.0 L349.0 220.0 L356.0 240.0 L361.0 255.0 L365.0 266.0 L368.5 256.0 L371.5 246.0 L372.6 244.4 L374.0 246.0 L377.0 251.5 L380.0 255.5 L384.0 258.5 L388.0 260.3 L392.0 262.0 L394.5 263.5 L396.0 267.0 L400.0 282.0 L403.2 294.0 L408.0 282.0 L416.8 260.3 L423.0 243.5 L429.6 226.3 L434.5 214.0 L439.2 203.3 L440.8 200.0 L441.5 179.5 L442.4 180.0 L443.3 214.2 L444.3 188.0 L453.0 170.0 L462.5 160.0 L464.1 150.0 L464.2 128.0 L467.1 128.0 L467.1 181.7 L468.0 179.2 L470.0 178.3 L472.0 180.0 L475.0 185.0 L478.5 192.5 L481.7 200.0 L488.3 213.3 L493.3 226.8 L500.0 250.0 L504.0 261.0 L506.0 266.0 L509.5 256.0 L512.5 246.5 L513.8 245.0 L515.0 246.5 L518.0 252.0 L520.5 255.3 L524.0 258.3 L528.0 260.8 L532.0 262.8 L535.3 264.2 L537.0 268.0 L541.0 283.0 L544.4 294.0 L549.0 283.0 L552.0 276.0 L560.0 256.0 L568.0 235.0 L573.6 222.0" fill="none" stroke="#e60606" stroke-width="2.6" stroke-linejoin="round" stroke-linecap="butt" /><path d="M300.7 200.0 L300.9 159.5 L301.8 206.0" fill="none" stroke="#e60606" stroke-width="2.2" stroke-linejoin="round" stroke-linecap="butt" /><path d="M441.8 203.0 L442.0 180.5 L443.0 213.0" fill="none" stroke="#e60606" stroke-width="2" stroke-linejoin="round" stroke-linecap="butt" /></g><rect x="649" y="136" width="292.5" height="159.7" fill="#f6fff6"/><path d="M658.5 136V295.7M666.5 136V295.7M673.5 136V295.7M681.5 136V295.7M689.5 136V295.7M697.5 136V295.7M705.5 136V295.7M713.5 136V295.7M721.5 136V295.7M729.5 136V295.7M737.5 136V295.7M744.5 136V295.7M752.5 136V295.7M760.5 136V295.7M768.5 136V295.7M776.5 136V295.7M784.5 136V295.7M792.5 136V295.7M800.5 136V295.7M808.5 136V295.7M815.5 136V295.7M823.5 136V295.7M831.5 136V295.7M839.5 136V295.7M847.5 136V295.7M855.5 136V295.7M863.5 136V295.7M871.5 136V295.7M879.5 136V295.7M887.5 136V295.7M894.5 136V295.7M902.5 136V295.7M910.5 136V295.7M918.5 136V295.7M926.5 136V295.7M934.5 136V295.7" stroke="#d0f3f6" stroke-width="1" fill="none"/><path d="M649 294.5H941.5M649 287.5H941.5M649 280.5H941.5M649 273.5H941.5M649 267.5H941.5M649 260.5H941.5M649 253.5H941.5M649 246.5H941.5M649 240.5H941.5M649 233.5H941.5M649 226.5H941.5M649 219.5H941.5M649 213.5H941.5M649 206.5H941.5M649 199.5H941.5M649 192.5H941.5M649 186.5H941.5M649 179.5H941.5M649 172.5H941.5M649 165.5H941.5M649 159.5H941.5M649 152.5H941.5M649 145.5H941.5M649 138.5H941.5" stroke="#aee6b2" stroke-width="1" fill="none"/><path d="M729.5 136V295.7M808.5 136V295.7M887.5 136V295.7" stroke="#9eeee2" stroke-width="1.2" fill="none"/><path d="M649 152.5H941.5M649 186.5H941.5M649 219.5H941.5M649 253.5H941.5M649 287.5H941.5" stroke="#38bc40" stroke-width="1.5" fill="none"/><path d="M649.5 295.7V136.5H941.5" stroke="#3f8f82" stroke-width="1" fill="none"/><text x="620.2" y="141.6" font-size="12" font-weight="normal" fill="#000" textLength="19.8" lengthAdjust="spacingAndGlyphs" >0.02</text><text x="620.2" y="156.7" font-size="12" font-weight="normal" fill="#000" textLength="19.8" lengthAdjust="spacingAndGlyphs" >0.02</text><text x="620.2" y="190.5" font-size="12" font-weight="normal" fill="#000" textLength="19.8" lengthAdjust="spacingAndGlyphs" >0.01</text><text x="620.2" y="224.2" font-size="12" font-weight="normal" fill="#000" textLength="19.8" lengthAdjust="spacingAndGlyphs" >0.00</text><text x="614.3" y="257.9" font-size="12" font-weight="normal" fill="#000" textLength="25.7" lengthAdjust="spacingAndGlyphs" >−0.01</text><text x="614.3" y="298.8" font-size="12" font-weight="normal" fill="#000" textLength="25.7" lengthAdjust="spacingAndGlyphs" >−0.02</text><path d="M643 137.5H648M643 152.5H648M643 186.5H648M643 219.5H648M643 253.5H648M643 287.5H648M643 294.5H648" stroke="#38bc40" stroke-width="1.5" fill="none"/><rect x="650" y="298" width="1" height="1" fill="#30b030"/><rect x="729" y="298" width="1" height="1" fill="#30b030"/><rect x="808" y="298" width="1" height="1" fill="#30b030"/><rect x="887" y="298" width="1" height="1" fill="#30b030"/><rect x="940" y="298" width="1" height="1" fill="#30b030"/><text x="640.4" y="310.3" font-size="12" font-weight="normal" fill="#000" textLength="19.8" lengthAdjust="spacingAndGlyphs" >0.00</text><text x="719.3" y="310.3" font-size="12" font-weight="normal" fill="#000" textLength="19.8" lengthAdjust="spacingAndGlyphs" >0.01</text><text x="798.2" y="310.3" font-size="12" font-weight="normal" fill="#000" textLength="19.8" lengthAdjust="spacingAndGlyphs" >0.02</text><text x="877.1" y="310.3" font-size="12" font-weight="normal" fill="#000" textLength="19.8" lengthAdjust="spacingAndGlyphs" >0.03</text><text x="930.1" y="310.3" font-size="12" font-weight="normal" fill="#000" textLength="19.8" lengthAdjust="spacingAndGlyphs" >0.04</text><clipPath id="c2"><rect x="649" y="137" width="292.5" height="158.7"/></clipPath><g clip-path="url(#c2)"><path d="M649.8 227.7 L654.7 227.7 L655.9 219.8 L663.6 219.8 L664.8 224.0 L666.2 236.0 L668.0 254.0 L670.0 274.0 L671.6 292.0 L672.3 294.3 L673.0 292.0 L674.4 270.0 L675.8 246.0 L677.0 222.0 L677.6 212.5 L678.8 211.3 L720.6 211.3 L721.0 220.0 L730.3 220.0 L732.0 206.0 L734.0 188.0 L736.0 170.0 L737.8 152.0 L738.6 144.5 L739.6 144.0 L740.6 149.0 L741.4 170.0 L742.0 200.0 L742.6 227.7 L786.1 227.7 L787.3 219.8 L795.0 219.8 L796.2 224.0 L797.6 236.0 L799.4 254.0 L801.4 274.0 L803.0 292.0 L803.7 294.3 L804.4 292.0 L805.8 270.0 L807.2 246.0 L808.4 222.0 L809.0 212.5 L810.2 211.3 L852.0 211.3 L852.4 220.0 L861.7 220.0 L862.3 204.6 L864.3 184.7 L866.3 164.8 L868.1 144.9 L868.9 136.6 L869.9 136.0 L870.9 141.6 L871.7 164.8 L872.3 197.9 L874.0 227.7 L917.5 227.7 L918.7 219.8 L926.4 219.8 L927.6 224.0 L929.0 236.0 L930.8 254.0 L932.8 274.0 L934.4 292.0 L935.1 294.3 L935.8 292.0 L937.2 270.0 L938.6 246.0 L939.8 222.0 L940.4 212.5" fill="none" stroke="#d60c0c" stroke-width="2" stroke-linejoin="round" stroke-linecap="butt" /><rect x="720.5" y="211.3" width="3.6" height="8.7" fill="#d60c0c"/><rect x="786.6" y="219.8" width="3.2" height="8" fill="#d60c0c"/></g><rect x="280" y="323" width="293.0" height="189.5" fill="#f6fff6"/><path d="M288.5 323V512.5M295.5 323V512.5M302.5 323V512.5M309.5 323V512.5M316.5 323V512.5M324.5 323V512.5M331.5 323V512.5M338.5 323V512.5M345.5 323V512.5M352.5 323V512.5M359.5 323V512.5M366.5 323V512.5M373.5 323V512.5M380.5 323V512.5M387.5 323V512.5M395.5 323V512.5M402.5 323V512.5M409.5 323V512.5M416.5 323V512.5M423.5 323V512.5M430.5 323V512.5M437.5 323V512.5M444.5 323V512.5M451.5 323V512.5M458.5 323V512.5M465.5 323V512.5M473.5 323V512.5M480.5 323V512.5M487.5 323V512.5M494.5 323V512.5M501.5 323V512.5M508.5 323V512.5M515.5 323V512.5M522.5 323V512.5M529.5 323V512.5M536.5 323V512.5M543.5 323V512.5M551.5 323V512.5M558.5 323V512.5M565.5 323V512.5" stroke="#d0f3f6" stroke-width="1" fill="none"/><path d="M280 510.5H573M280 504.5H573M280 499.5H573M280 494.5H573M280 489.5H573M280 484.5H573M280 478.5H573M280 473.5H573M280 468.5H573M280 463.5H573M280 458.5H573M280 452.5H573M280 447.5H573M280 442.5H573M280 437.5H573M280 432.5H573M280 426.5H573M280 421.5H573M280 416.5H573M280 411.5H573M280 405.5H573M280 400.5H573M280 395.5H573M280 390.5H573M280 385.5H573M280 379.5H573M280 374.5H573M280 369.5H573M280 364.5H573M280 359.5H573M280 353.5H573M280 348.5H573M280 343.5H573M280 338.5H573M280 333.5H573M280 327.5H573" stroke="#aee6b2" stroke-width="1" fill="none"/><path d="M338.5 323V512.5M395.5 323V512.5M451.5 323V512.5M508.5 323V512.5M565.5 323V512.5" stroke="#9eeee2" stroke-width="1.2" fill="none"/><path d="M280 510.5H573M280 484.5H573M280 458.5H573M280 432.5H573M280 405.5H573M280 379.5H573M280 353.5H573M280 327.5H573" stroke="#38bc40" stroke-width="1.5" fill="none"/><path d="M280.5 512.5V323.5H573" stroke="#27507c" stroke-width="1" fill="none"/><text x="251.2" y="328.6" font-size="12" font-weight="normal" fill="#000" textLength="19.8" lengthAdjust="spacingAndGlyphs" >11.3</text><text x="257.1" y="358.2" font-size="12" font-weight="normal" fill="#000" textLength="13.9" lengthAdjust="spacingAndGlyphs" >0.0</text><text x="245.3" y="384.2" font-size="12" font-weight="normal" fill="#000" textLength="25.7" lengthAdjust="spacingAndGlyphs" >−10.0</text><text x="245.3" y="410.3" font-size="12" font-weight="normal" fill="#000" textLength="25.7" lengthAdjust="spacingAndGlyphs" >−20.0</text><text x="245.3" y="436.3" font-size="12" font-weight="normal" fill="#000" textLength="25.7" lengthAdjust="spacingAndGlyphs" >−30.0</text><text x="245.3" y="462.3" font-size="12" font-weight="normal" fill="#000" textLength="25.7" lengthAdjust="spacingAndGlyphs" >−40.0</text><text x="245.3" y="488.4" font-size="12" font-weight="normal" fill="#000" textLength="25.7" lengthAdjust="spacingAndGlyphs" >−50.0</text><text x="245.3" y="515.9" font-size="12" font-weight="normal" fill="#000" textLength="25.7" lengthAdjust="spacingAndGlyphs" >−60.6</text><path d="M274 324.5H279.5M274 327.5H279.5M274 353.5H279.5M274 379.5H279.5M274 405.5H279.5M274 432.5H279.5M274 458.5H279.5M274 484.5H279.5M274 510.5H279.5M274 511.5H279.5" stroke="#38bc40" stroke-width="1.5" fill="none"/><rect x="281" y="515" width="1" height="1" fill="#30b030"/><rect x="338" y="515" width="1" height="1" fill="#30b030"/><rect x="395" y="515" width="1" height="1" fill="#30b030"/><rect x="451" y="515" width="1" height="1" fill="#30b030"/><rect x="508" y="515" width="1" height="1" fill="#30b030"/><rect x="571" y="515" width="1" height="1" fill="#30b030"/><text x="274.6" y="527.6" font-size="12" font-weight="normal" fill="#000" textLength="13.8" lengthAdjust="spacingAndGlyphs" >0.0</text><text x="319.6" y="527.6" font-size="12" font-weight="normal" fill="#000" textLength="37.5" lengthAdjust="spacingAndGlyphs" >20000.0</text><text x="376.2" y="527.6" font-size="12" font-weight="normal" fill="#000" textLength="37.6" lengthAdjust="spacingAndGlyphs" >40000.0</text><text x="433.1" y="527.6" font-size="12" font-weight="normal" fill="#000" textLength="37.5" lengthAdjust="spacingAndGlyphs" >60000.0</text><text x="489.8" y="527.6" font-size="12" font-weight="normal" fill="#000" textLength="37.4" lengthAdjust="spacingAndGlyphs" >80000.0</text><text x="549.3" y="527.6" font-size="12" font-weight="normal" fill="#000" textLength="43.4" lengthAdjust="spacingAndGlyphs" >102011.7</text><clipPath id="c3"><rect x="280" y="324" width="293" height="188.5"/></clipPath><g clip-path="url(#c3)"><path d="M282.7 404.6 L285.0 416.1 L287.7 427.0 L290.0 435.5 L292.7 444.0 L295.0 451.7 L297.7 458.0 L300.0 457.7 L302.7 452.0 L304.0 436.6 L304.7 423.0 L305.4 436.6 L306.7 448.8 L309.0 457.3 L312.7 468.4 L316.0 475.5 L319.3 481.1 L326.0 485.7 L334.0 491.5 L342.7 496.1 L352.7 498.6 L362.7 500.0 L376.0 500.5 L389.0 499.9 L401.7 498.9 L409.5 498.4 L411.0 492.1 L412.0 481.7 L413.2 486.7 L414.5 487.5 L416.5 494.2 L419.3 498.6 L425.0 496.9 L438.8 497.9 L458.4 498.4 L476.0 499.1 L479.0 498.8 L479.8 495.1 L480.6 498.9 L482.0 499.8 L493.5 502.4 L511.0 503.2 L526.7 501.5 L546.3 499.0 L561.9 497.5 L572.3 498.1 L572.3 504.0 L561.9 503.9 L546.3 505.0 L526.7 506.5 L511.0 507.6 L493.5 507.1 L482.0 504.2 L480.6 503.6 L479.8 502.2 L479.0 503.2 L476.0 503.4 L458.4 502.1 L438.8 501.2 L425.0 501.6 L419.3 501.4 L416.5 499.8 L414.5 496.5 L413.2 496.3 L412.0 494.8 L411.0 499.9 L409.5 503.1 L401.7 502.2 L389.0 503.6 L376.0 504.5 L362.7 505.0 L352.7 505.4 L342.7 503.9 L334.0 500.5 L326.0 495.3 L319.3 488.9 L316.0 484.5 L312.7 479.6 L309.0 470.7 L306.7 461.2 L305.4 453.4 L304.7 446.0 L304.0 453.4 L302.7 462.0 L300.0 472.3 L297.7 468.0 L295.0 461.3 L292.7 454.0 L290.0 449.5 L287.7 445.0 L285.0 436.9 L282.7 421.4Z" fill="#1040c8"/><path d="M281.3 324.5 L281.6 352.0 L281.9 378.0 L282.3 392.0 L282.7 403.4 L283.2 429.5 L283.7 410.2 L284.1 432.4 L284.7 407.0 L285.3 438.4 L286.0 416.0 L286.7 441.5 L287.3 413.2 L287.8 450.9 L288.5 422.9 L289.2 450.6 L289.9 435.1 L290.4 456.1 L291.0 437.3 L291.5 453.6 L292.1 437.6 L292.8 458.4 L293.5 446.3 L294.2 462.8 L294.9 450.7 L295.5 463.3 L296.2 449.9 L296.8 467.5 L297.3 453.7 L297.8 474.4 L298.3 453.4 L298.9 475.9 L299.3 451.8 L299.8 475.7 L300.2 451.6 L301.0 473.9 L301.5 451.9 L302.1 466.7 L302.9 447.6 L303.5 457.6 L304.3 427.3 L304.7 450.0 L305.1 425.1 L305.5 458.5 L306.1 441.7 L306.8 461.0 L307.4 445.9 L308.0 469.8 L308.5 454.1 L309.1 472.4 L309.8 460.2 L310.5 475.6 L311.1 462.8 L311.7 480.8 L312.2 465.5 L312.8 484.0 L313.3 466.6 L313.8 481.9 L314.4 471.6 L315.1 483.6 L315.8 472.5 L316.3 485.0 L317.0 476.4 L317.5 487.9 L318.3 473.7 L319.0 492.1 L319.7 478.0 L320.4 493.0 L320.9 481.4 L321.4 490.8 L321.9 477.2 L322.6 495.7 L323.3 478.3 L323.7 494.0 L324.3 483.1 L324.9 495.4 L325.6 483.7 L326.2 495.8 L326.8 486.0 L327.6 499.7 L328.0 484.6 L328.4 497.6 L329.0 486.3 L329.6 501.6 L330.1 488.9 L330.8 498.3 L331.3 488.6 L331.9 501.4 L332.4 489.3 L333.0 502.7 L333.4 490.7 L334.0 503.6 L334.7 489.5 L335.2 502.8 L335.8 489.8 L336.3 503.3 L336.7 491.5 L337.4 505.5 L338.1 490.7 L338.7 502.4 L339.3 490.9 L339.9 505.5 L340.4 491.3 L341.1 503.0 L341.5 492.2 L341.9 506.6 L342.6 493.7 L343.3 505.9 L343.7 493.7 L344.4 504.2 L345.1 496.9 L345.7 507.2 L346.2 496.4 L346.8 505.6 L347.4 496.3 L347.8 506.1 L348.4 495.1 L349.0 507.2 L349.6 496.4 L350.3 505.2 L351.0 495.3 L351.5 507.4 L352.0 498.1 L352.5 505.8 L353.2 498.1 L353.8 507.9 L354.3 495.3 L354.8 505.5 L355.3 496.8 L356.1 506.4 L356.6 496.9 L357.2 506.4 L357.9 498.4 L358.7 506.2 L359.2 497.7 L359.9 507.3 L360.4 499.2 L361.0 507.2 L361.5 497.7 L362.0 506.7 L362.5 498.0 L363.0 506.2 L363.4 499.4 L364.0 505.2 L364.7 499.3 L365.1 505.3 L365.6 498.2 L366.0 506.9 L366.7 498.6 L367.3 506.2 L367.8 498.6 L368.5 505.8 L369.0 499.7 L369.7 505.8 L370.3 499.1 L371.0 505.9 L371.7 500.3 L372.4 505.7 L373.0 499.6 L373.5 504.5 L374.1 499.5 L374.7 504.9 L375.4 500.6 L375.8 505.8 L376.4 499.9 L377.0 504.9 L377.5 500.1 L377.9 505.7 L378.4 500.3 L379.0 505.7 L379.6 500.3 L380.1 505.0 L380.6 500.0 L381.0 505.5 L381.7 499.7 L382.3 505.1 L383.0 499.8 L383.5 504.9 L383.9 498.9 L384.5 504.7 L385.0 498.1 L385.6 504.5 L386.3 498.5 L387.0 505.6 L387.5 500.0 L388.2 504.0 L388.9 499.9 L389.5 505.1 L390.1 499.4 L390.9 504.8 L391.5 499.0 L391.9 503.2 L392.4 498.9 L393.0 503.7 L393.5 498.9 L394.0 503.2 L394.7 499.0 L395.3 503.8 L395.7 499.2 L396.1 503.4 L396.6 499.2 L397.1 502.6 L397.5 497.9 L398.1 503.1 L398.5 498.6 L398.9 504.0 L399.3 498.4 L400.0 502.8 L400.4 497.9 L401.0 502.9 L401.6 498.7 L402.2 503.2 L402.7 497.8 L403.3 503.9 L403.7 496.6 L404.5 502.7 L405.0 497.3 L405.7 502.5 L406.4 496.8 L406.9 504.5 L407.4 498.0 L408.1 503.1 L408.8 496.7 L409.5 503.8 L410.0 494.3 L410.5 501.3 L411.1 488.5 L411.7 496.9 L412.1 479.5 L412.7 495.6 L413.4 484.2 L414.1 498.1 L414.8 487.4 L415.2 498.8 L415.6 489.6 L416.1 500.9 L416.5 494.0 L417.1 499.9 L417.8 496.0 L418.4 502.2 L419.0 497.5 L419.5 501.4 L419.9 498.5 L420.4 502.7 L421.0 497.9 L421.6 502.5 L422.3 497.2 L422.8 501.6 L423.5 495.8 L424.0 502.4 L424.5 496.5 L424.9 502.7 L425.4 495.6 L425.9 502.2 L426.4 496.2 L426.9 501.7 L427.6 495.3 L428.2 503.4 L428.7 495.2 L429.5 502.3 L430.0 495.3 L430.5 503.3 L430.9 496.0 L431.5 504.0 L432.0 496.7 L432.7 502.7 L433.1 497.1 L433.5 501.5 L434.2 495.8 L434.9 501.8 L435.4 497.0 L436.0 501.8 L436.5 497.1 L437.2 501.6 L437.9 498.0 L438.4 502.0 L438.9 497.7 L439.4 502.7 L440.2 498.1 L440.6 501.8 L441.0 497.2 L441.5 501.6 L442.0 496.2 L442.7 502.4 L443.3 497.8 L444.0 502.6 L444.7 497.3 L445.2 501.3 L445.9 496.7 L446.5 503.0 L447.1 497.6 L447.6 501.7 L448.3 497.4 L448.8 502.3 L449.4 496.6 L449.9 502.5 L450.6 496.9 L451.2 501.6 L451.8 497.5 L452.5 503.3 L453.1 497.8 L453.8 503.4 L454.3 496.8 L454.8 503.3 L455.3 496.8 L455.8 502.5 L456.3 498.1 L456.7 502.2 L457.1 497.6 L457.8 503.0 L458.2 498.1 L458.6 502.4 L459.1 496.8 L459.9 502.3 L460.3 496.8 L461.0 504.6 L461.4 498.4 L462.1 502.2 L462.7 498.1 L463.3 504.2 L463.7 498.6 L464.2 504.1 L464.7 497.0 L465.4 502.9 L466.2 498.0 L466.7 502.5 L467.3 497.4 L467.9 503.6 L468.5 497.3 L469.1 504.6 L469.6 497.1 L470.0 503.3 L470.4 497.1 L471.1 505.7 L471.8 497.1 L472.4 504.5 L473.0 498.3 L473.6 503.6 L474.1 498.6 L474.7 505.1 L475.4 497.5 L476.2 503.7 L476.8 497.7 L477.4 503.7 L477.9 498.0 L478.7 505.3 L479.2 496.4 L479.8 504.9 L480.2 494.5 L480.9 504.4 L481.5 497.6 L482.2 505.7 L482.7 499.0 L483.3 505.8 L483.9 500.1 L484.4 506.0 L484.8 499.9 L485.2 506.1 L485.8 499.1 L486.5 507.3 L487.1 500.9 L487.7 506.6 L488.2 501.0 L488.8 508.3 L489.2 499.6 L489.7 506.9 L490.2 500.4 L490.8 506.4 L491.4 501.9 L492.1 509.0 L492.5 501.2 L493.2 508.8 L493.8 501.2 L494.2 507.9 L494.9 502.6 L495.4 508.3 L495.9 501.6 L496.5 507.6 L497.1 501.5 L497.6 509.2 L498.2 501.4 L498.9 509.2 L499.6 500.2 L500.1 507.5 L500.5 501.0 L501.0 509.3 L501.5 500.2 L502.0 509.1 L502.4 502.1 L502.9 507.7 L503.5 502.3 L504.0 508.2 L504.5 501.5 L505.1 508.6 L505.8 502.3 L506.4 508.7 L506.8 501.4 L507.4 508.6 L508.1 501.7 L508.8 509.5 L509.5 502.3 L510.2 508.1 L510.8 503.2 L511.5 508.4 L512.2 502.3 L512.8 509.1 L513.2 501.5 L513.7 509.2 L514.3 500.8 L515.0 510.0 L515.6 502.1 L516.2 507.6 L516.8 501.9 L517.4 507.6 L517.9 501.8 L518.4 508.2 L518.8 501.5 L519.4 507.1 L520.0 500.3 L520.6 507.6 L521.1 501.6 L521.5 508.9 L522.1 501.6 L522.5 507.9 L523.0 501.6 L523.7 508.3 L524.1 500.3 L524.6 507.5 L525.1 500.0 L525.8 507.0 L526.3 499.6 L526.9 507.9 L527.5 501.0 L528.1 508.6 L528.8 501.0 L529.3 508.5 L530.0 498.2 L530.7 508.4 L531.1 498.6 L531.7 507.8 L532.3 499.3 L532.7 506.1 L533.4 498.4 L534.1 506.7 L534.9 499.1 L535.5 505.5 L536.2 497.3 L536.7 508.2 L537.4 499.3 L537.9 507.3 L538.4 499.0 L538.9 505.9 L539.3 499.3 L539.9 506.9 L540.3 500.0 L540.8 506.8 L541.5 498.1 L542.1 506.6 L542.6 499.6 L543.2 505.2 L543.8 497.7 L544.3 507.9 L544.8 496.4 L545.4 506.3 L546.1 495.7 L546.5 506.9 L547.2 499.1 L547.7 506.1 L548.2 498.7 L548.7 509.1 L549.1 498.8 L549.7 506.9 L550.3 498.7 L550.9 507.2 L551.5 495.9 L552.2 506.1 L552.8 495.3 L553.4 505.0 L553.9 497.4 L554.6 507.2 L555.0 495.2 L555.6 506.0 L556.1 498.1 L556.7 504.8 L557.3 497.2 L557.7 506.2 L558.2 495.8 L558.7 504.5 L559.3 496.0 L559.7 506.2 L560.3 496.3 L560.7 504.9 L561.4 494.9 L562.1 506.2 L562.9 497.4 L563.6 504.0 L564.3 497.0 L565.0 505.0 L565.5 495.3 L566.0 505.0 L566.5 498.0 L567.0 504.9 L567.5 497.9 L568.0 504.4 L568.5 495.3 L569.0 504.4 L569.6 497.0 L570.1 506.3 L570.7 495.7 L571.2 504.3 L572.0 495.5" fill="none" stroke="#1040c8" stroke-width="1.1" stroke-linejoin="round" stroke-linecap="butt" /><path d="M304.2 440.0 L304.7 413.7 L305.2 440.0" fill="none" stroke="#1040c8" stroke-width="1.3" stroke-linejoin="round" stroke-linecap="butt" /><path d="M411.3 495.0 L412.0 477.5 L412.7 495.0" fill="none" stroke="#1040c8" stroke-width="1.3" stroke-linejoin="round" stroke-linecap="butt" /><path d="M287.7 452.0 L288.0 461.0 L288.3 452.0" fill="none" stroke="#1040c8" stroke-width="1" stroke-linejoin="round" stroke-linecap="butt" /><path d="M299.7 478.0 L300.0 490.0 L300.3 478.0" fill="none" stroke="#1040c8" stroke-width="1" stroke-linejoin="round" stroke-linecap="butt" /><path d="M347.4 507.0 L347.7 511.0 L348.0 507.0" fill="none" stroke="#1040c8" stroke-width="1" stroke-linejoin="round" stroke-linecap="butt" /><path d="M281.500 324V380" stroke="#1040c8" stroke-width="2"/></g><rect x="647" y="323" width="293.0" height="189.5" fill="#f6fff6"/><path d="M655.5 323V512.5M662.5 323V512.5M669.5 323V512.5M676.5 323V512.5M684.5 323V512.5M691.5 323V512.5M698.5 323V512.5M705.5 323V512.5M713.5 323V512.5M720.5 323V512.5M727.5 323V512.5M734.5 323V512.5M742.5 323V512.5M749.5 323V512.5M756.5 323V512.5M763.5 323V512.5M771.5 323V512.5M778.5 323V512.5M785.5 323V512.5M792.5 323V512.5M800.5 323V512.5M807.5 323V512.5M814.5 323V512.5M821.5 323V512.5M829.5 323V512.5M836.5 323V512.5M843.5 323V512.5M850.5 323V512.5M858.5 323V512.5M865.5 323V512.5M872.5 323V512.5M879.5 323V512.5M887.5 323V512.5M894.5 323V512.5M901.5 323V512.5M908.5 323V512.5M916.5 323V512.5M923.5 323V512.5M930.5 323V512.5M937.5 323V512.5" stroke="#d0f3f6" stroke-width="1" fill="none"/><path d="M647 502.5H940M647 492.5H940M647 481.5H940M647 471.5H940M647 460.5H940M647 450.5H940M647 440.5H940M647 429.5H940M647 419.5H940M647 408.5H940M647 398.5H940M647 387.5H940M647 377.5H940M647 367.5H940M647 356.5H940M647 346.5H940M647 335.5H940M647 325.5H940" stroke="#aee6b2" stroke-width="1" fill="none"/><path d="M720.5 323V512.5M792.5 323V512.5M865.5 323V512.5M937.5 323V512.5" stroke="#9eeee2" stroke-width="1.2" fill="none"/><path d="M647 492.5H940M647 471.5H940M647 450.5H940M647 429.5H940M647 408.5H940M647 387.5H940M647 367.5H940M647 346.5H940M647 326.5H940" stroke="#38bc40" stroke-width="1.5" fill="none"/><path d="M647.5 512.5V323.5H940" stroke="#27507c" stroke-width="1" fill="none"/><text x="612.3" y="328.6" font-size="12" font-weight="normal" fill="#000" textLength="25.7" lengthAdjust="spacingAndGlyphs" >−49.6</text><text x="612.3" y="350.6" font-size="12" font-weight="normal" fill="#000" textLength="25.7" lengthAdjust="spacingAndGlyphs" >−55.0</text><text x="612.3" y="371.4" font-size="12" font-weight="normal" fill="#000" textLength="25.7" lengthAdjust="spacingAndGlyphs" >−60.0</text><text x="612.3" y="392.3" font-size="12" font-weight="normal" fill="#000" textLength="25.7" lengthAdjust="spacingAndGlyphs" >−65.0</text><text x="612.3" y="413.1" font-size="12" font-weight="normal" fill="#000" textLength="25.7" lengthAdjust="spacingAndGlyphs" >−70.0</text><text x="612.3" y="433.9" font-size="12" font-weight="normal" fill="#000" textLength="25.7" lengthAdjust="spacingAndGlyphs" >−75.0</text><text x="612.3" y="454.8" font-size="12" font-weight="normal" fill="#000" textLength="25.7" lengthAdjust="spacingAndGlyphs" >−80.0</text><text x="612.3" y="475.6" font-size="12" font-weight="normal" fill="#000" textLength="25.7" lengthAdjust="spacingAndGlyphs" >−85.0</text><text x="612.3" y="496.4" font-size="12" font-weight="normal" fill="#000" textLength="25.7" lengthAdjust="spacingAndGlyphs" >−90.0</text><text x="612.3" y="515.6" font-size="12" font-weight="normal" fill="#000" textLength="25.7" lengthAdjust="spacingAndGlyphs" >−94.6</text><path d="M641 324.5H646M641 326.5H646M641 346.5H646M641 367.5H646M641 387.5H646M641 408.5H646M641 429.5H646M641 450.5H646M641 471.5H646M641 492.5H646M641 511.5H646" stroke="#38bc40" stroke-width="1.5" fill="none"/><rect x="648" y="515" width="1" height="1" fill="#30b030"/><rect x="720" y="515" width="1" height="1" fill="#30b030"/><rect x="792" y="515" width="1" height="1" fill="#30b030"/><rect x="865" y="515" width="1" height="1" fill="#30b030"/><rect x="938" y="515" width="1" height="1" fill="#30b030"/><text x="641.0" y="527.6" font-size="12" font-weight="normal" fill="#000" textLength="13.9" lengthAdjust="spacingAndGlyphs" >0.0</text><text x="704.7" y="527.6" font-size="12" font-weight="normal" fill="#000" textLength="31.6" lengthAdjust="spacingAndGlyphs" >1000.0</text><text x="777.1" y="527.6" font-size="12" font-weight="normal" fill="#000" textLength="31.6" lengthAdjust="spacingAndGlyphs" >2000.0</text><text x="849.6" y="527.6" font-size="12" font-weight="normal" fill="#000" textLength="31.6" lengthAdjust="spacingAndGlyphs" >3000.0</text><text x="922.2" y="527.6" font-size="12" font-weight="normal" fill="#000" textLength="31.6" lengthAdjust="spacingAndGlyphs" >4023.2</text><clipPath id="c4"><rect x="647" y="324" width="293" height="188.5"/></clipPath><g clip-path="url(#c4)"><path d="M647.6 470.0 L648.0 444.7 L649.5 400.0 L650.6 360.0 L652.3 324.7 L653.4 340.0 L654.5 346.0 L655.6 390.0 L656.7 418.0 L658.0 385.0 L659.3 352.0 L660.4 345.0 L661.3 328.0 L662.4 345.0 L663.3 352.0 L664.5 400.0 L665.7 436.3 L667.0 395.0 L668.3 352.0 L669.7 327.3 L671.0 348.0 L672.0 355.0 L673.0 410.0 L674.0 451.3 L675.4 410.0 L676.8 365.0 L678.3 339.7 L679.6 358.0 L680.8 366.0 L681.8 405.0 L683.0 438.0 L684.4 402.0 L685.8 368.0 L687.3 348.0 L688.6 370.0 L689.6 385.0 L690.6 430.0 L691.7 466.3 L693.0 425.0 L694.3 385.0 L695.7 363.0 L697.0 385.0 L698.0 398.0 L699.0 440.0 L700.0 474.7 L701.4 430.0 L702.8 392.0 L704.3 373.0 L705.6 395.0 L706.6 410.0 L707.6 455.0 L708.7 494.7 L710.0 450.0 L711.5 412.0 L713.0 394.7 L714.4 415.0 L715.4 428.0 L716.3 455.0 L717.3 474.7 L718.8 440.0 L720.3 412.0 L721.7 398.0 L723.0 418.0 L724.0 430.0 L725.0 448.0 L726.0 459.7 L727.5 432.0 L729.0 410.0 L730.3 398.0 L731.6 420.0 L732.6 435.0 L733.6 462.0 L734.7 478.0 L736.0 450.0 L737.5 424.0 L739.0 408.0 L740.3 428.0 L741.3 445.0 L742.3 470.0 L743.3 484.7 L744.8 455.0 L746.3 428.0 L747.7 409.7 L749.0 430.0 L750.0 447.0 L751.0 474.0 L752.0 488.0 L753.5 460.0 L755.0 435.0 L756.3 418.0 L757.6 440.0 L758.7 458.0 L759.7 476.0 L760.7 484.7 L762.2 462.0 L763.6 442.0 L765.0 427.0 L766.5 440.0 L767.5 450.0 L768.6 462.0 L769.7 469.7 L771.0 458.0 L772.5 442.0 L773.8 433.0 L775.0 444.0 L776.0 455.0 L777.0 464.0 L778.0 470.8 L779.5 456.0 L781.0 438.0 L782.3 428.7 L783.6 442.0 L784.8 455.0 L785.9 470.0 L787.0 480.0 L788.5 464.0 L789.8 450.0 L791.0 442.0 L792.3 455.0 L793.5 470.0 L794.8 486.0 L796.0 496.0 L797.5 478.0 L799.0 460.0 L800.2 452.4 L801.2 462.0 L802.2 476.0 L803.2 484.6 L804.8 468.0 L806.5 452.0 L808.3 441.0 L809.5 452.0 L810.8 466.0 L812.9 480.0 L814.5 468.0 L816.3 453.6 L817.5 465.0 L818.6 478.0 L819.8 489.2 L821.5 482.0 L823.5 475.0 L825.5 470.8 L826.6 475.0 L827.8 478.9 L830.0 465.0 L832.4 470.8 L834.7 466.2 L837.0 475.4 L839.3 467.0 L841.6 478.9 L843.2 472.0 L846.2 482.3 L848.0 484.0 L850.0 487.6 L852.0 482.0 L854.3 477.7 L856.6 476.6 L858.5 466.0 L860.5 455.9 L862.0 462.0 L863.4 466.2 L865.8 470.0 L867.2 463.0 L868.6 457.8 L870.0 466.0 L871.2 476.0 L872.5 482.5 L873.8 477.0 L875.0 473.3 L878.3 477.5 L880.5 486.0 L882.5 495.0 L884.7 495.0 L885.5 484.0 L886.3 476.7 L887.5 474.2 L889.5 481.0 L891.7 488.3 L893.5 478.0 L895.3 467.5 L897.5 473.0 L899.7 477.5 L901.7 471.0 L903.7 465.0 L905.6 471.0 L907.5 477.5 L909.6 470.0 L911.7 463.3 L914.0 470.0 L916.7 477.5 L919.0 478.0 L921.7 479.2 L923.5 482.0 L925.0 486.7 L926.6 498.0 L928.3 511.7 L929.2 495.0 L930.0 478.3 L932.5 475.0 L934.4 482.0 L936.3 490.0 L937.5 483.0 L938.7 475.8 L939.4 474.0" fill="none" stroke="#0e2f9c" stroke-width="1.35" stroke-linejoin="round" stroke-linecap="butt" /></g><g transform="translate(0,-0.8)"><rect x="287.5" y="537.5" width="49.500" height="18" fill="#fcfcfc" stroke="#202020" stroke-width="1.200"/><path d="M298.5 553.5V540.0H316.5" stroke="#9a9a9a" stroke-width="1" fill="none"/><rect x="318.5" y="539.5" width="16.500" height="14" fill="#a8a8a8"/><path d="M318.5 553.5V539.5H335.0" stroke="#e4e4e4" stroke-width="1" fill="none"/><path d="M335.0 539.5V553.5H318.5" stroke="#585858" stroke-width="1.200" fill="none"/><path d="M323.5 545.5h6.500l-3.250 3.200z" fill="#000"/><text x="290.0" y="545.0" font-size="7.5" font-weight="bold" fill="#000" textLength="4.0" lengthAdjust="spacingAndGlyphs" >I</text><text x="293.0" y="553.0" font-size="7.5" font-weight="bold" fill="#000" textLength="4.0" lengthAdjust="spacingAndGlyphs" >0</text><path d="M289.7 550.5L296.5 542.0" stroke="#000" stroke-width="0.900"/><text x="303.5" y="551" font-size="12" font-weight="bold" fill="#000" textLength="5.5" lengthAdjust="spacingAndGlyphs" >v</text><rect x="345.5" y="538" width="6.500" height="8.500" fill="#a8a8a8"/><rect x="345.5" y="547.5" width="6.500" height="8.500" fill="#a8a8a8"/><path d="M345.5 546.5V538H352.0M345.5 556V547.5H352.0" stroke="#e0e0e0" stroke-width="0.800" fill="none"/><path d="M352.0 538V546.5H345.5M352.0 547.5V556H345.5" stroke="#606060" stroke-width="0.800" fill="none"/><path d="M346.7 544h4.200l-2.100 -3.800zM346.7 549.8h4.200l-2.100 3.800z" fill="#000"/><rect x="354.500" y="539.500" width="32.500" height="14.500" fill="#fff" stroke="#202020" stroke-width="1"/><text x="356.5" y="551" font-size="13" font-weight="bold" fill="#000" textLength="28.0" lengthAdjust="spacingAndGlyphs" >Hann</text><rect x="397.5" y="538" width="6.500" height="8.500" fill="#a8a8a8"/><rect x="397.5" y="547.5" width="6.500" height="8.500" fill="#a8a8a8"/><path d="M397.5 546.5V538H404.0M397.5 556V547.5H404.0" stroke="#e0e0e0" stroke-width="0.800" fill="none"/><path d="M404.0 538V546.5H397.5M404.0 547.5V556H397.5" stroke="#606060" stroke-width="0.800" fill="none"/><path d="M398.7 544h4.200l-2.100 -3.800zM398.7 549.8h4.200l-2.100 3.800z" fill="#000"/><path d="M406.500 552V539.500H463" stroke="#8a8a8a" stroke-width="1" fill="none"/><text x="407.5" y="551" font-size="13" font-weight="bold" fill="#000" textLength="50.5" lengthAdjust="spacingAndGlyphs" >205000.0</text><text x="468" y="551.5" font-size="13" font-weight="bold" fill="#000" textLength="13.0" lengthAdjust="spacingAndGlyphs" >Hz</text><rect x="487.5" y="538" width="6.500" height="8.500" fill="#a8a8a8"/><rect x="487.5" y="547.5" width="6.500" height="8.500" fill="#a8a8a8"/><path d="M487.5 546.5V538H494.0M487.5 556V547.5H494.0" stroke="#e0e0e0" stroke-width="0.800" fill="none"/><path d="M494.0 538V546.5H487.5M494.0 547.5V556H487.5" stroke="#606060" stroke-width="0.800" fill="none"/><path d="M488.7 544h4.200l-2.100 -3.800zM488.7 549.8h4.200l-2.100 3.800z" fill="#000"/><rect x="496.500" y="539.500" width="42" height="13.500" fill="#fff" stroke="#202020" stroke-width="1"/><text x="510.5" y="551" font-size="13" font-weight="bold" fill="#000" textLength="26.0" lengthAdjust="spacingAndGlyphs" >7000</text><text x="541" y="550.5" font-size="13" font-weight="bold" fill="#000" textLength="27.0" lengthAdjust="spacingAndGlyphs" >word</text><rect x="654.5" y="537.5" width="49.500" height="18" fill="#fcfcfc" stroke="#202020" stroke-width="1.200"/><path d="M665.5 553.5V540.0H683.5" stroke="#9a9a9a" stroke-width="1" fill="none"/><rect x="685.5" y="539.5" width="16.500" height="14" fill="#a8a8a8"/><path d="M685.5 553.5V539.5H702.0" stroke="#e4e4e4" stroke-width="1" fill="none"/><path d="M702.0 539.5V553.5H685.5" stroke="#585858" stroke-width="1.200" fill="none"/><path d="M690.5 545.5h6.500l-3.250 3.200z" fill="#000"/><text x="657.0" y="545.0" font-size="7.5" font-weight="bold" fill="#000" textLength="4.0" lengthAdjust="spacingAndGlyphs" >I</text><text x="660.0" y="553.0" font-size="7.5" font-weight="bold" fill="#000" textLength="4.0" lengthAdjust="spacingAndGlyphs" >0</text><path d="M656.7 550.5L663.5 542.0" stroke="#000" stroke-width="0.900"/><text x="672.5" y="551" font-size="12" font-weight="bold" fill="#000" textLength="3.0" lengthAdjust="spacingAndGlyphs" >i</text><rect x="712.5" y="538" width="6.500" height="8.500" fill="#a8a8a8"/><rect x="712.5" y="547.5" width="6.500" height="8.500" fill="#a8a8a8"/><path d="M712.5 546.5V538H719.0M712.5 556V547.5H719.0" stroke="#e0e0e0" stroke-width="0.800" fill="none"/><path d="M719.0 538V546.5H712.5M719.0 547.5V556H712.5" stroke="#606060" stroke-width="0.800" fill="none"/><path d="M713.7 544h4.200l-2.100 -3.800zM713.7 549.8h4.200l-2.100 3.800z" fill="#000"/><rect x="721.500" y="539.500" width="32.500" height="14.500" fill="#fff" stroke="#202020" stroke-width="1"/><text x="723.5" y="551" font-size="13" font-weight="bold" fill="#000" textLength="28.0" lengthAdjust="spacingAndGlyphs" >Hann</text><rect x="764.2" y="538" width="6.500" height="8.500" fill="#a8a8a8"/><rect x="764.2" y="547.5" width="6.500" height="8.500" fill="#a8a8a8"/><path d="M764.2 546.5V538H770.7M764.2 556V547.5H770.7" stroke="#e0e0e0" stroke-width="0.800" fill="none"/><path d="M770.7 538V546.5H764.2M770.7 547.5V556H764.2" stroke="#606060" stroke-width="0.800" fill="none"/><path d="M765.4000000000001 544h4.200l-2.100 -3.800zM765.4000000000001 549.8h4.200l-2.100 3.800z" fill="#000"/><path d="M773 552V539.500H830" stroke="#8a8a8a" stroke-width="1" fill="none"/><text x="774" y="551" font-size="13" font-weight="bold" fill="#000" textLength="37.0" lengthAdjust="spacingAndGlyphs" >8100.0</text><text x="835" y="551.5" font-size="13" font-weight="bold" fill="#000" textLength="13.0" lengthAdjust="spacingAndGlyphs" >Hz</text><rect x="854.5" y="538" width="6.500" height="8.500" fill="#a8a8a8"/><rect x="854.5" y="547.5" width="6.500" height="8.500" fill="#a8a8a8"/><path d="M854.5 546.5V538H861.0M854.5 556V547.5H861.0" stroke="#e0e0e0" stroke-width="0.800" fill="none"/><path d="M861.0 538V546.5H854.5M861.0 547.5V556H854.5" stroke="#606060" stroke-width="0.800" fill="none"/><path d="M855.7 544h4.200l-2.100 -3.800zM855.7 549.8h4.200l-2.100 3.800z" fill="#000"/><rect x="863.500" y="539.500" width="42.500" height="13.500" fill="#fff" stroke="#202020" stroke-width="1"/><text x="883" y="551" font-size="13" font-weight="bold" fill="#000" textLength="20.5" lengthAdjust="spacingAndGlyphs" >300</text><text x="908" y="550.5" font-size="13" font-weight="bold" fill="#000" textLength="27.5" lengthAdjust="spacingAndGlyphs" >word</text></g></svg>
</body></html>
